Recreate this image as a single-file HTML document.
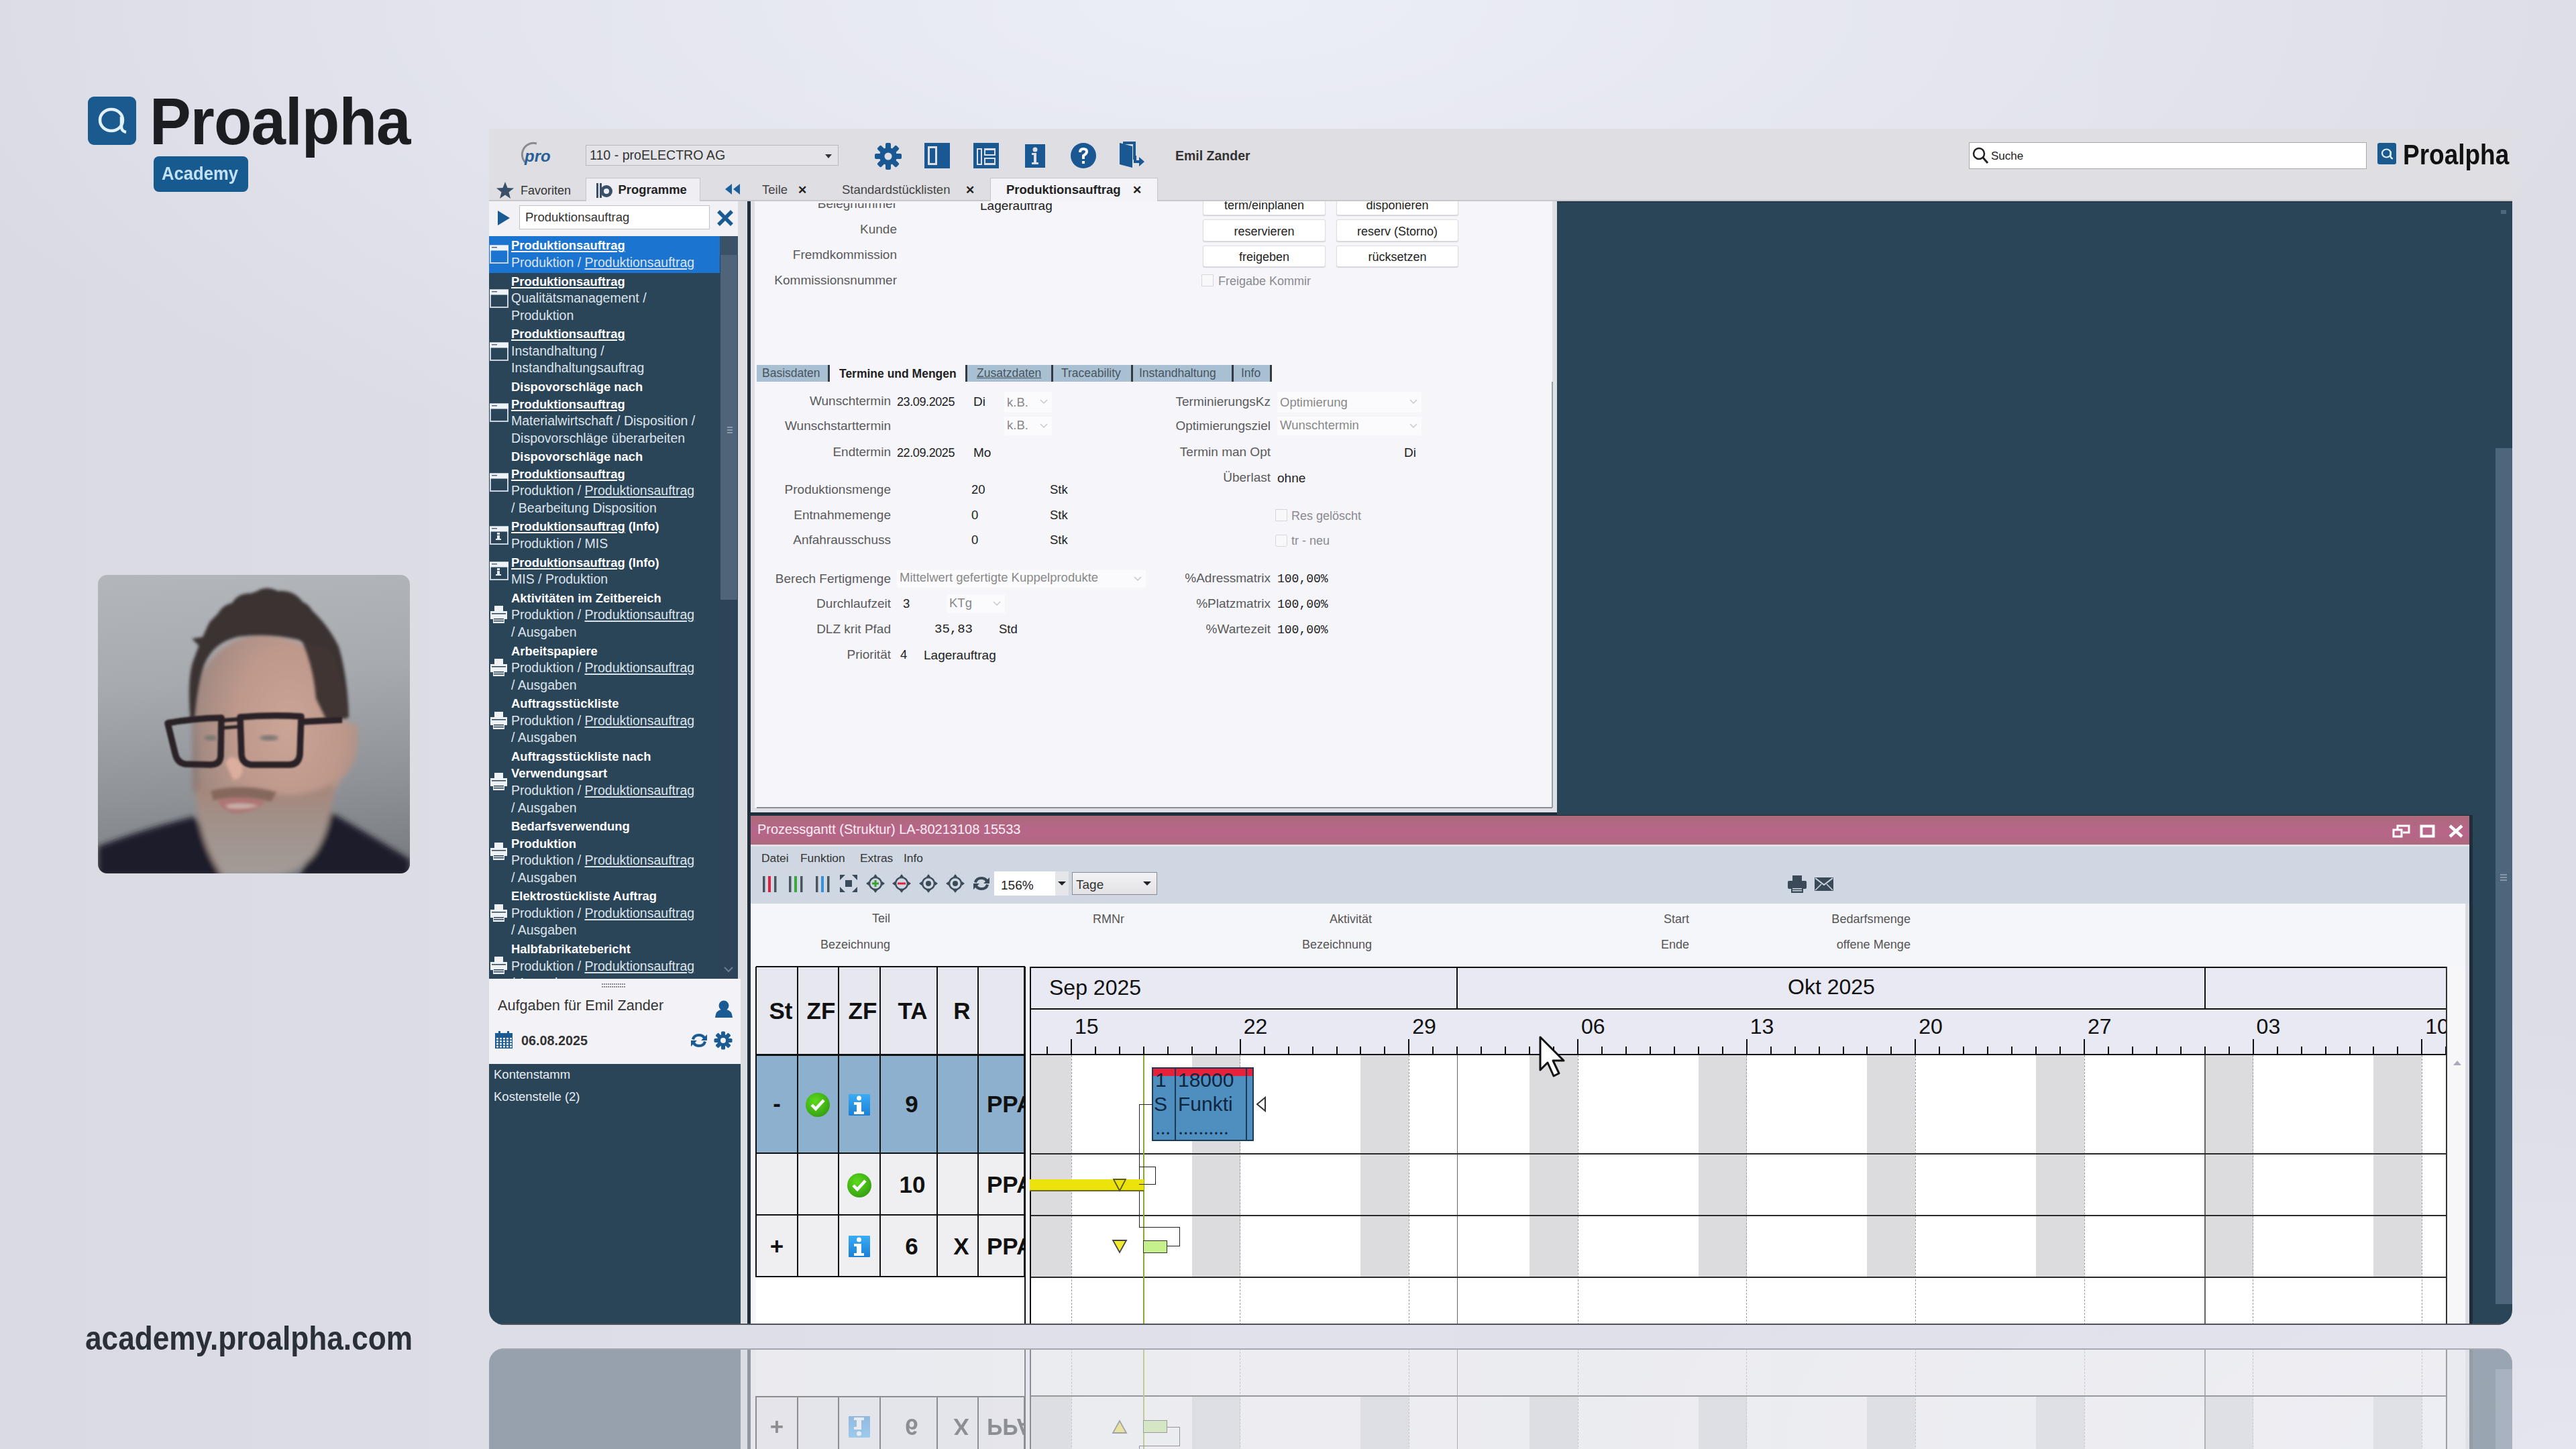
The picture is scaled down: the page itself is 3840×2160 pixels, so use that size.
<!DOCTYPE html><html><head><meta charset="utf-8"><style>
html,body{margin:0;padding:0;width:3840px;height:2160px;overflow:hidden;}
body{background:radial-gradient(ellipse 55% 35% at 48% 0%,rgba(236,238,248,0.95),rgba(236,238,248,0) 100%),radial-gradient(ellipse 40% 30% at 100% 100%,rgba(230,231,240,0.8),rgba(230,231,240,0) 100%),linear-gradient(90deg,#d9dae2 0%,#dcdde5 20%,#e0e1e9 50%,#dcdde5 100%);position:relative;font-family:'Liberation Sans',sans-serif;}
.t{position:absolute;white-space:nowrap;line-height:1;}
.r{position:absolute;}
.u{text-decoration:underline;text-underline-offset:2px;text-decoration-thickness:1.5px;}
</style></head><body>
<div class="r" style="left:131.0px;top:144.0px;width:72.0px;height:72.0px;background:#1b5a8f;border-radius:9px;"></div>
<svg class="r" style="left:131px;top:144px;" width="72" height="72" viewBox="0 0 72 72"><ellipse cx="35" cy="35" rx="17" ry="16" fill="none" stroke="#e3f1fd" stroke-width="4.5"/><path d="M50 30 L50 46 Q51 52 57 53" fill="none" stroke="#e3f1fd" stroke-width="4.5"/></svg>
<div class="t" style="left:223.0px;top:131.2px;font-size:99px;color:#1b1d21;font-weight:700;font-family:'Liberation Sans',sans-serif;transform-origin:0 0;transform:scaleX(0.935);letter-spacing:-1px;">Proalpha</div>
<div class="r" style="left:229.0px;top:233.0px;width:141.0px;height:53.0px;background:#175a8f;border-radius:8px;"></div>
<div class="t" style="left:241.0px;top:245.3px;font-size:28px;color:#c4e2f7;font-weight:700;font-family:'Liberation Sans',sans-serif;transform-origin:0 0;transform:scaleX(0.915);">Academy</div>
<div class="t" style="left:127.0px;top:1969.7px;font-size:50px;color:#2b2f37;font-weight:700;font-family:'Liberation Sans',sans-serif;transform-origin:0 0;transform:scaleX(0.884);">academy.proalpha.com</div>
<div class="r" style="left:146px;top:857px;width:465px;height:445px;border-radius:14px;overflow:hidden;background:linear-gradient(175deg,#b3b7bc 0%,#a7abb0 35%,#8f9297 70%,#76797e 100%);">
<svg width="465" height="445" viewBox="0 0 465 445" style="position:absolute;left:0;top:0">
<defs>
<filter id="bl" x="-20%" y="-20%" width="140%" height="140%"><feGaussianBlur stdDeviation="4"/></filter>
<filter id="bl2" x="-20%" y="-20%" width="140%" height="140%"><feGaussianBlur stdDeviation="2"/></filter>
<filter id="bl3" x="-20%" y="-20%" width="140%" height="140%"><feGaussianBlur stdDeviation="1"/></filter>
<radialGradient id="skin" cx="58%" cy="38%" r="60%"><stop offset="0" stop-color="#cba596"/><stop offset="0.55" stop-color="#bd988b"/><stop offset="1" stop-color="#9c8780"/></radialGradient>
<linearGradient id="brd" x1="0" y1="0" x2="0" y2="1"><stop offset="0" stop-color="#a88375"/><stop offset="0.45" stop-color="#a1918a"/><stop offset="1" stop-color="#a29c98"/></linearGradient>
</defs>
<g filter="url(#bl)">
<path d="M0 405 Q60 381 144 360 L200 450 L0 450 Z" fill="#1b1c29"/>
<path d="M465 424 Q400 384 347 354 L300 450 L465 450 Z" fill="#1b1c29"/>
<path d="M141 172 Q170 95 240 88 Q300 90 330 120 Q356 160 360 215 L387 225 Q392 280 362 305 L353 322 Q345 372 320 410 Q290 450 250 450 L185 450 Q150 400 146 330 Q141 250 141 172 Z" fill="url(#skin)"/>
<path d="M145 300 Q165 330 175 325 Q220 312 262 325 Q300 335 352 310 Q350 380 320 420 Q290 450 250 450 L190 450 Q155 400 148 340 Z" fill="url(#brd)"/>
<path d="M141 172 Q150 260 150 320 Q145 330 141 320 Z" fill="#8f7a74"/>
</g>
<g filter="url(#bl2)">
<path d="M138 215 Q132 150 144 123 Q152 100 166 71 Q195 38 235 25 Q275 22 307 43 Q340 68 359 107 Q372 150 374 212 L356 214 Q345 170 330 135 Q318 108 300 97 Q255 86 210 92 Q172 100 158 135 Q148 165 144 215 Z" fill="#3b3330"/>
<path d="M325 184 Q322 140 305 100 L345 110 Q368 150 372 214 L340 215 Z" fill="#3f3632"/>
<path d="M172 75 Q180 45 200 42 Q210 25 232 28 Q248 14 268 24 Q292 22 305 40 Q322 48 322 66 Z" fill="#3b3330"/>
<path d="M155 110 L140 95 L160 92 Z" fill="#3b3330"/>
<path d="M178 336 Q215 326 250 338 Q232 356 200 355 Q185 350 178 336 Z" fill="#ad7674"/>
<path d="M190 280 Q200 262 214 282 Q220 302 202 306 Z" fill="#dcae9f"/>
<path d="M168 322 Q215 310 266 324 L258 338 Q215 326 172 336 Z" fill="#85685c"/><path d="M190 343 Q215 338 240 344 Q220 350 195 348 Z" fill="#c9aea8"/>
</g>
<g filter="url(#bl3)" fill="none" stroke="#2a2028" stroke-width="9.5" stroke-linejoin="round">
<path d="M104 221 Q140 214 184 213 L183 270 Q182 283 168 283 L130 282 Q118 280 115 266 Z"/>
<path d="M212 212 Q260 208 303 211 L301 268 Q299 283 285 283 L228 283 Q215 281 214 268 Z"/>
<path d="M184 217 L212 215" stroke-width="6"/><path d="M187 228 L213 226" stroke-width="5"/><path d="M303 219 L364 216"/>
</g>
<g filter="url(#bl2)"><ellipse cx="168" cy="243" rx="10" ry="4" fill="#7d7874"/><ellipse cx="255" cy="243" rx="14" ry="4" fill="#7d7874"/></g>
</svg></div>
<div id="app" class="r" style="left:729px;top:192px;width:3016px;height:1783px;border-radius:0 0 22px 22px;overflow:hidden;background:#e0e0e4;">
<div class="r" style="left:0.0px;top:0.0px;width:3016.0px;height:108.0px;background:#dfdfe3;"></div>
<svg class="r" style="left:41px;top:16px;" width="60" height="42" viewBox="0 0 60 42"><path d="M14 35 A17 17 0 0 1 30 6" fill="none" stroke="#8a8a90" stroke-width="3"/></svg>
<div class="t" style="left:53.0px;top:28.7px;font-size:24px;color:#2a5f95;font-weight:700;font-family:'Liberation Sans',sans-serif;font-style:italic;">pro</div>
<div class="r" style="left:144.0px;top:24.0px;width:377.0px;height:31.0px;background:#e4e4e8;border:1.5px solid #b9b9be;box-sizing:border-box;"></div>
<div class="t" style="left:150.0px;top:30.4px;font-size:19.6px;color:#333;font-weight:400;font-family:'Liberation Sans',sans-serif;">110 - proELECTRO AG</div>
<svg class="r" style="left:499px;top:36px;" width="14" height="10" viewBox="0 0 14 10"><path d="M2 2 L12 2 L7 8 Z" fill="#333"/></svg>
<svg class="r" style="left:574px;top:20px;" width="42" height="42" viewBox="0 0 42 42"><g transform="translate(21,21)" fill="#1a5893"><circle r="13"/><rect x="-4" y="-20" width="8" height="11" rx="2" transform="rotate(0)"/><rect x="-4" y="-20" width="8" height="11" rx="2" transform="rotate(45)"/><rect x="-4" y="-20" width="8" height="11" rx="2" transform="rotate(90)"/><rect x="-4" y="-20" width="8" height="11" rx="2" transform="rotate(135)"/><rect x="-4" y="-20" width="8" height="11" rx="2" transform="rotate(180)"/><rect x="-4" y="-20" width="8" height="11" rx="2" transform="rotate(225)"/><rect x="-4" y="-20" width="8" height="11" rx="2" transform="rotate(270)"/><rect x="-4" y="-20" width="8" height="11" rx="2" transform="rotate(315)"/></g><circle cx="21" cy="21" r="5.5" fill="#dfdfe3"/></svg>
<svg class="r" style="left:648px;top:20px;" width="40" height="40" viewBox="0 0 40 40"><rect x="1" y="1" width="38" height="38" fill="#1a5893"/><rect x="6" y="6" width="14" height="28" fill="#dfdfe3"/><rect x="9" y="9" width="8" height="22" fill="#1a5893"/></svg>
<svg class="r" style="left:721px;top:20px;" width="40" height="40" viewBox="0 0 40 40"><rect x="1" y="1" width="38" height="38" fill="#1a5893"/><rect x="6" y="9" width="8" height="25" fill="#dfdfe3"/><rect x="17" y="9" width="17" height="11" fill="#dfdfe3"/><rect x="17" y="23" width="17" height="11" fill="#dfdfe3"/><rect x="8" y="11" width="4" height="21" fill="#1a5893"/><rect x="19" y="12" width="13" height="6" fill="#1a5893"/><rect x="19" y="25" width="13" height="6" fill="#1a5893"/></svg>
<svg class="r" style="left:796px;top:20px;" width="36" height="40" viewBox="0 0 36 40"><rect x="3" y="3" width="30" height="35" fill="#1a5893"/><circle cx="18" cy="11" r="3.5" fill="#dfdfe3"/><path d="M13 16 L20 16 L20 30 L23 30 L23 33 L13 33 L13 30 L16 30 L16 19 L13 19 Z" fill="#dfdfe3"/></svg>
<svg class="r" style="left:866px;top:20px;" width="40" height="40" viewBox="0 0 40 40"><circle cx="20" cy="20" r="19" fill="#1a5893"/><path d="M13 15 Q13 8 20 8 Q27 8 27 14 Q27 18 22 21 L22 25 L18 25 L18 19 Q23 16 23 14 Q23 12 20 12 Q17 12 17 15 Z" fill="#fff"/><rect x="18" y="28" width="4" height="4" fill="#fff"/></svg>
<svg class="r" style="left:937px;top:18px;" width="42" height="44" viewBox="0 0 42 44"><path d="M3 3 L22 8 L22 40 L3 35 Z" fill="#1a5893"/><path d="M8 3 L25 3 L25 28" fill="none" stroke="#1a5893" stroke-width="4"/><path d="M24 22 L24 33 L32 33 L32 38 L40 31 L32 24 L32 29 L28 29 L28 22 Z" fill="#1a5893"/></svg>
<div class="t" style="left:1023.0px;top:30.5px;font-size:19.5px;color:#333;font-weight:700;font-family:'Liberation Sans',sans-serif;">Emil Zander</div>
<div class="r" style="left:2206.0px;top:20.0px;width:593.0px;height:40.0px;background:#ffffff;border:1.5px solid #a8a8ad;box-sizing:border-box;"></div>
<svg class="r" style="left:2210px;top:26px;" width="28" height="30" viewBox="0 0 28 30"><circle cx="11" cy="11" r="8" fill="none" stroke="#222" stroke-width="2.5"/><path d="M17 17 L24 25" stroke="#222" stroke-width="3"/></svg>
<div class="t" style="left:2239.0px;top:31.6px;font-size:17px;color:#222;font-weight:400;font-family:'Liberation Sans',sans-serif;">Suche</div>
<div class="r" style="left:2815.0px;top:21.0px;width:28.0px;height:32.0px;background:#1b5a8f;border-radius:3px;"></div>
<svg class="r" style="left:2815px;top:21px;" width="28" height="32" viewBox="0 0 28 32"><ellipse cx="13.5" cy="15.5" rx="6.5" ry="6" fill="none" stroke="#e3f1fd" stroke-width="2.2"/><path d="M19.5 13 L19.5 20 Q20 23 23 23.5" fill="none" stroke="#e3f1fd" stroke-width="2.2"/></svg>
<div class="t" style="left:2853.0px;top:16.6px;font-size:43px;color:#111;font-weight:700;font-family:'Liberation Sans',sans-serif;transform-origin:0 0;transform:scaleX(0.86);">Proalpha</div>
<div class="r" style="left:0.0px;top:106.0px;width:3016.0px;height:2.0px;background:#c8c8cc;"></div>
<svg class="r" style="left:10px;top:78px;" width="28" height="28" viewBox="0 0 28 28"><path d="M14 1 L17.5 10 L27 10.5 L19.5 16.5 L22 26 L14 20.5 L6 26 L8.5 16.5 L1 10.5 L10.5 10 Z" fill="#3a5068"/></svg>
<div class="t" style="left:47.0px;top:82.8px;font-size:18px;color:#333;font-weight:400;font-family:'Liberation Sans',sans-serif;">Favoriten</div>
<div class="r" style="left:144.0px;top:73.0px;width:171.0px;height:35.0px;background:#eeeef3;border:1.5px solid #c6c6cb;border-bottom:none;box-sizing:border-box;"></div>
<svg class="r" style="left:158px;top:78px;" width="28" height="28" viewBox="0 0 28 28"><rect x="2" y="3" width="3" height="22" fill="#3a5068"/><rect x="7" y="3" width="3" height="22" fill="#3a5068"/><circle cx="17" cy="15" r="9" fill="#3a5068"/><circle cx="17" cy="15" r="4" fill="#eeeef3"/></svg>
<div class="t" style="left:192.5px;top:82.4px;font-size:18.4px;color:#222;font-weight:700;font-family:'Liberation Sans',sans-serif;">Programme</div>
<svg class="r" style="left:350px;top:80px;" width="26" height="20" viewBox="0 0 26 20"><path d="M12 2 L12 18 L2 10 Z M24 2 L24 18 L14 10 Z" fill="#1a5f9e"/></svg>
<div class="t" style="left:407.0px;top:82.3px;font-size:18.5px;color:#444;font-weight:400;font-family:'Liberation Sans',sans-serif;">Teile</div>
<div class="t" style="left:460.0px;top:82.6px;font-size:17px;color:#222;font-weight:700;font-family:'Liberation Sans',sans-serif;">✕</div>
<div class="t" style="left:526.0px;top:82.3px;font-size:18.5px;color:#444;font-weight:400;font-family:'Liberation Sans',sans-serif;">Standardstücklisten</div>
<div class="t" style="left:710.0px;top:82.6px;font-size:17px;color:#222;font-weight:700;font-family:'Liberation Sans',sans-serif;">✕</div>
<div class="r" style="left:747.0px;top:73.0px;width:250.0px;height:35.0px;background:#f3f3f8;border:1.5px solid #c6c6cb;border-bottom:none;box-sizing:border-box;"></div>
<div class="t" style="left:771.0px;top:82.3px;font-size:18.5px;color:#222;font-weight:700;font-family:'Liberation Sans',sans-serif;">Produktionsauftrag</div>
<div class="t" style="left:959.0px;top:82.6px;font-size:17px;color:#222;font-weight:700;font-family:'Liberation Sans',sans-serif;">✕</div>
<div class="r" style="left:0.0px;top:108.0px;width:375.0px;height:52.0px;background:#f2f2f6;"></div>
<svg class="r" style="left:11px;top:121px;" width="22" height="24" viewBox="0 0 22 24"><path d="M2 1 L20 12 L2 23 Z" fill="#1a5b93"/></svg>
<div class="r" style="left:45.0px;top:114.0px;width:284.0px;height:36.0px;background:#ffffff;border:1.5px solid #c4c4c8;box-sizing:border-box;"></div>
<div class="t" style="left:54.0px;top:123.3px;font-size:18.5px;color:#333;font-weight:400;font-family:'Liberation Sans',sans-serif;">Produktionsauftrag</div>
<svg class="r" style="left:339px;top:120px;" width="26" height="26" viewBox="0 0 26 26"><path d="M3 3 L23 23 M23 3 L3 23" stroke="#1a5b93" stroke-width="5.5"/></svg>
<div class="r" style="left:0.0px;top:160.0px;width:375.0px;height:1107.0px;background:#2a4458;"></div>
<div class="r" style="left:0.0px;top:160.0px;width:344.0px;height:55.0px;background:#1b74d0;"></div>
<div class="r" style="left:344.0px;top:160.0px;width:27.0px;height:1107.0px;background:#2d4358;"></div>
<div class="r" style="left:344.0px;top:160.0px;width:27.0px;height:28.0px;background:#3b5165;"></div>
<div class="r" style="left:345.0px;top:188.0px;width:25.0px;height:514.0px;background:#4f6478;"></div>
<div class="r" style="left:355.0px;top:444.0px;width:8.0px;height:2.0px;background:#8a9aa9;"></div>
<div class="r" style="left:355.0px;top:448.0px;width:8.0px;height:2.0px;background:#8a9aa9;"></div>
<div class="r" style="left:355.0px;top:452.0px;width:8.0px;height:2.0px;background:#8a9aa9;"></div>
<div class="r" style="left:371.0px;top:108.0px;width:13.0px;height:1675.0px;background:#dcdde3;"></div>
<div class="r" style="left:385.0px;top:108.0px;width:5.0px;height:1675.0px;background:#1f2e3b;"></div>
<div class="r" style="left:0px;top:160px;width:344px;height:1107px;overflow:hidden;">
<svg class="r" style="left:1px;top:13px;" width="28" height="28" viewBox="0 0 28 28"><rect x="1" y="1.5" width="26" height="25.5" fill="none" stroke="#c9d3dd" stroke-width="2"/><rect x="0" y="0.5" width="28" height="8" fill="#eef3f8"/><rect x="3" y="3" width="8" height="1.5" fill="#556677"/></svg>
<div class="t" style="left:33.0px;top:5.4px;font-size:18.4px;color:#ffffff;font-weight:700;font-family:'Liberation Sans',sans-serif;"><span class="u">Produktionsauftrag</span></div>
<div class="t" style="left:33.0px;top:30.0px;font-size:19.5px;color:#dce3ea;font-weight:400;font-family:'Liberation Sans',sans-serif;">Produktion / <span class="u">Produktionsauftrag</span></div>
<svg class="r" style="left:1px;top:79px;" width="28" height="28" viewBox="0 0 28 28"><rect x="1" y="1.5" width="26" height="25.5" fill="none" stroke="#c9d3dd" stroke-width="2"/><rect x="0" y="0.5" width="28" height="8" fill="#eef3f8"/><rect x="3" y="3" width="8" height="1.5" fill="#556677"/></svg>
<div class="t" style="left:33.0px;top:58.6px;font-size:18.4px;color:#ffffff;font-weight:700;font-family:'Liberation Sans',sans-serif;"><span class="u">Produktionsauftrag</span></div>
<div class="t" style="left:33.0px;top:83.2px;font-size:19.5px;color:#dce3ea;font-weight:400;font-family:'Liberation Sans',sans-serif;">Qualitätsmanagement /</div>
<div class="t" style="left:33.0px;top:108.7px;font-size:19.5px;color:#dce3ea;font-weight:400;font-family:'Liberation Sans',sans-serif;">Produktion</div>
<svg class="r" style="left:1px;top:158px;" width="28" height="28" viewBox="0 0 28 28"><rect x="1" y="1.5" width="26" height="25.5" fill="none" stroke="#c9d3dd" stroke-width="2"/><rect x="0" y="0.5" width="28" height="8" fill="#eef3f8"/><rect x="3" y="3" width="8" height="1.5" fill="#556677"/></svg>
<div class="t" style="left:33.0px;top:137.3px;font-size:18.4px;color:#ffffff;font-weight:700;font-family:'Liberation Sans',sans-serif;"><span class="u">Produktionsauftrag</span></div>
<div class="t" style="left:33.0px;top:161.9px;font-size:19.5px;color:#dce3ea;font-weight:400;font-family:'Liberation Sans',sans-serif;">Instandhaltung /</div>
<div class="t" style="left:33.0px;top:187.4px;font-size:19.5px;color:#dce3ea;font-weight:400;font-family:'Liberation Sans',sans-serif;">Instandhaltungsauftrag</div>
<svg class="r" style="left:1px;top:249px;" width="28" height="28" viewBox="0 0 28 28"><rect x="1" y="1.5" width="26" height="25.5" fill="none" stroke="#c9d3dd" stroke-width="2"/><rect x="0" y="0.5" width="28" height="8" fill="#eef3f8"/><rect x="3" y="3" width="8" height="1.5" fill="#556677"/></svg>
<div class="t" style="left:33.0px;top:216.0px;font-size:18.4px;color:#ffffff;font-weight:700;font-family:'Liberation Sans',sans-serif;">Dispovorschläge nach</div>
<div class="t" style="left:33.0px;top:241.5px;font-size:18.4px;color:#ffffff;font-weight:700;font-family:'Liberation Sans',sans-serif;"><span class="u">Produktionsauftrag</span></div>
<div class="t" style="left:33.0px;top:266.1px;font-size:19.5px;color:#dce3ea;font-weight:400;font-family:'Liberation Sans',sans-serif;">Materialwirtschaft / Disposition /</div>
<div class="t" style="left:33.0px;top:291.6px;font-size:19.5px;color:#dce3ea;font-weight:400;font-family:'Liberation Sans',sans-serif;">Dispovorschläge überarbeiten</div>
<svg class="r" style="left:1px;top:353px;" width="28" height="28" viewBox="0 0 28 28"><rect x="1" y="1.5" width="26" height="25.5" fill="none" stroke="#c9d3dd" stroke-width="2"/><rect x="0" y="0.5" width="28" height="8" fill="#eef3f8"/><rect x="3" y="3" width="8" height="1.5" fill="#556677"/></svg>
<div class="t" style="left:33.0px;top:320.2px;font-size:18.4px;color:#ffffff;font-weight:700;font-family:'Liberation Sans',sans-serif;">Dispovorschläge nach</div>
<div class="t" style="left:33.0px;top:345.7px;font-size:18.4px;color:#ffffff;font-weight:700;font-family:'Liberation Sans',sans-serif;"><span class="u">Produktionsauftrag</span></div>
<div class="t" style="left:33.0px;top:370.3px;font-size:19.5px;color:#dce3ea;font-weight:400;font-family:'Liberation Sans',sans-serif;">Produktion / <span class="u">Produktionsauftrag</span></div>
<div class="t" style="left:33.0px;top:395.8px;font-size:19.5px;color:#dce3ea;font-weight:400;font-family:'Liberation Sans',sans-serif;">/ Bearbeitung Disposition</div>
<svg class="r" style="left:1px;top:432px;" width="28" height="28" viewBox="0 0 28 28"><rect x="1" y="1.5" width="26" height="25.5" fill="none" stroke="#c9d3dd" stroke-width="2"/><rect x="0" y="0.5" width="28" height="8" fill="#eef3f8"/><rect x="3" y="3" width="8" height="1.5" fill="#556677"/><rect x="11" y="10" width="4" height="3" fill="#e6ecf1"/><rect x="11" y="14" width="4" height="7" fill="#e6ecf1"/><rect x="9" y="19" width="8" height="2" fill="#e6ecf1"/></svg>
<div class="t" style="left:33.0px;top:424.4px;font-size:18.4px;color:#ffffff;font-weight:700;font-family:'Liberation Sans',sans-serif;"><span class="u">Produktionsauftrag</span> (Info)</div>
<div class="t" style="left:33.0px;top:449.0px;font-size:19.5px;color:#dce3ea;font-weight:400;font-family:'Liberation Sans',sans-serif;">Produktion / MIS</div>
<svg class="r" style="left:1px;top:485px;" width="28" height="28" viewBox="0 0 28 28"><rect x="1" y="1.5" width="26" height="25.5" fill="none" stroke="#c9d3dd" stroke-width="2"/><rect x="0" y="0.5" width="28" height="8" fill="#eef3f8"/><rect x="3" y="3" width="8" height="1.5" fill="#556677"/><rect x="11" y="10" width="4" height="3" fill="#e6ecf1"/><rect x="11" y="14" width="4" height="7" fill="#e6ecf1"/><rect x="9" y="19" width="8" height="2" fill="#e6ecf1"/></svg>
<div class="t" style="left:33.0px;top:477.6px;font-size:18.4px;color:#ffffff;font-weight:700;font-family:'Liberation Sans',sans-serif;"><span class="u">Produktionsauftrag</span> (Info)</div>
<div class="t" style="left:33.0px;top:502.2px;font-size:19.5px;color:#dce3ea;font-weight:400;font-family:'Liberation Sans',sans-serif;">MIS / Produktion</div>
<svg class="r" style="left:1px;top:551px;" width="28" height="28" viewBox="0 0 28 28"><rect x="7" y="0" width="13" height="9" fill="#eef2f5"/><rect x="1" y="8" width="25" height="12" fill="#eef2f5"/><rect x="5" y="16" width="17" height="10" fill="#eef2f5"/><rect x="6" y="19" width="15" height="1.5" fill="#2a4257"/><rect x="6" y="22" width="15" height="1.5" fill="#2a4257"/><rect x="3" y="11" width="21" height="1.5" fill="#2a4257"/></svg>
<div class="t" style="left:33.0px;top:530.8px;font-size:18.4px;color:#ffffff;font-weight:700;font-family:'Liberation Sans',sans-serif;">Aktivitäten im Zeitbereich</div>
<div class="t" style="left:33.0px;top:555.4px;font-size:19.5px;color:#dce3ea;font-weight:400;font-family:'Liberation Sans',sans-serif;">Produktion / <span class="u">Produktionsauftrag</span></div>
<div class="t" style="left:33.0px;top:580.9px;font-size:19.5px;color:#dce3ea;font-weight:400;font-family:'Liberation Sans',sans-serif;">/ Ausgaben</div>
<svg class="r" style="left:1px;top:630px;" width="28" height="28" viewBox="0 0 28 28"><rect x="7" y="0" width="13" height="9" fill="#eef2f5"/><rect x="1" y="8" width="25" height="12" fill="#eef2f5"/><rect x="5" y="16" width="17" height="10" fill="#eef2f5"/><rect x="6" y="19" width="15" height="1.5" fill="#2a4257"/><rect x="6" y="22" width="15" height="1.5" fill="#2a4257"/><rect x="3" y="11" width="21" height="1.5" fill="#2a4257"/></svg>
<div class="t" style="left:33.0px;top:609.5px;font-size:18.4px;color:#ffffff;font-weight:700;font-family:'Liberation Sans',sans-serif;">Arbeitspapiere</div>
<div class="t" style="left:33.0px;top:634.1px;font-size:19.5px;color:#dce3ea;font-weight:400;font-family:'Liberation Sans',sans-serif;">Produktion / <span class="u">Produktionsauftrag</span></div>
<div class="t" style="left:33.0px;top:659.6px;font-size:19.5px;color:#dce3ea;font-weight:400;font-family:'Liberation Sans',sans-serif;">/ Ausgaben</div>
<svg class="r" style="left:1px;top:709px;" width="28" height="28" viewBox="0 0 28 28"><rect x="7" y="0" width="13" height="9" fill="#eef2f5"/><rect x="1" y="8" width="25" height="12" fill="#eef2f5"/><rect x="5" y="16" width="17" height="10" fill="#eef2f5"/><rect x="6" y="19" width="15" height="1.5" fill="#2a4257"/><rect x="6" y="22" width="15" height="1.5" fill="#2a4257"/><rect x="3" y="11" width="21" height="1.5" fill="#2a4257"/></svg>
<div class="t" style="left:33.0px;top:688.2px;font-size:18.4px;color:#ffffff;font-weight:700;font-family:'Liberation Sans',sans-serif;">Auftragsstückliste</div>
<div class="t" style="left:33.0px;top:712.8px;font-size:19.5px;color:#dce3ea;font-weight:400;font-family:'Liberation Sans',sans-serif;">Produktion / <span class="u">Produktionsauftrag</span></div>
<div class="t" style="left:33.0px;top:738.3px;font-size:19.5px;color:#dce3ea;font-weight:400;font-family:'Liberation Sans',sans-serif;">/ Ausgaben</div>
<svg class="r" style="left:1px;top:800px;" width="28" height="28" viewBox="0 0 28 28"><rect x="7" y="0" width="13" height="9" fill="#eef2f5"/><rect x="1" y="8" width="25" height="12" fill="#eef2f5"/><rect x="5" y="16" width="17" height="10" fill="#eef2f5"/><rect x="6" y="19" width="15" height="1.5" fill="#2a4257"/><rect x="6" y="22" width="15" height="1.5" fill="#2a4257"/><rect x="3" y="11" width="21" height="1.5" fill="#2a4257"/></svg>
<div class="t" style="left:33.0px;top:766.9px;font-size:18.4px;color:#ffffff;font-weight:700;font-family:'Liberation Sans',sans-serif;">Auftragsstückliste nach</div>
<div class="t" style="left:33.0px;top:792.4px;font-size:18.4px;color:#ffffff;font-weight:700;font-family:'Liberation Sans',sans-serif;">Verwendungsart</div>
<div class="t" style="left:33.0px;top:817.0px;font-size:19.5px;color:#dce3ea;font-weight:400;font-family:'Liberation Sans',sans-serif;">Produktion / <span class="u">Produktionsauftrag</span></div>
<div class="t" style="left:33.0px;top:842.5px;font-size:19.5px;color:#dce3ea;font-weight:400;font-family:'Liberation Sans',sans-serif;">/ Ausgaben</div>
<svg class="r" style="left:1px;top:904px;" width="28" height="28" viewBox="0 0 28 28"><rect x="7" y="0" width="13" height="9" fill="#eef2f5"/><rect x="1" y="8" width="25" height="12" fill="#eef2f5"/><rect x="5" y="16" width="17" height="10" fill="#eef2f5"/><rect x="6" y="19" width="15" height="1.5" fill="#2a4257"/><rect x="6" y="22" width="15" height="1.5" fill="#2a4257"/><rect x="3" y="11" width="21" height="1.5" fill="#2a4257"/></svg>
<div class="t" style="left:33.0px;top:871.1px;font-size:18.4px;color:#ffffff;font-weight:700;font-family:'Liberation Sans',sans-serif;">Bedarfsverwendung</div>
<div class="t" style="left:33.0px;top:896.6px;font-size:18.4px;color:#ffffff;font-weight:700;font-family:'Liberation Sans',sans-serif;">Produktion</div>
<div class="t" style="left:33.0px;top:921.2px;font-size:19.5px;color:#dce3ea;font-weight:400;font-family:'Liberation Sans',sans-serif;">Produktion / <span class="u">Produktionsauftrag</span></div>
<div class="t" style="left:33.0px;top:946.7px;font-size:19.5px;color:#dce3ea;font-weight:400;font-family:'Liberation Sans',sans-serif;">/ Ausgaben</div>
<svg class="r" style="left:1px;top:996px;" width="28" height="28" viewBox="0 0 28 28"><rect x="7" y="0" width="13" height="9" fill="#eef2f5"/><rect x="1" y="8" width="25" height="12" fill="#eef2f5"/><rect x="5" y="16" width="17" height="10" fill="#eef2f5"/><rect x="6" y="19" width="15" height="1.5" fill="#2a4257"/><rect x="6" y="22" width="15" height="1.5" fill="#2a4257"/><rect x="3" y="11" width="21" height="1.5" fill="#2a4257"/></svg>
<div class="t" style="left:33.0px;top:975.3px;font-size:18.4px;color:#ffffff;font-weight:700;font-family:'Liberation Sans',sans-serif;">Elektrostückliste Auftrag</div>
<div class="t" style="left:33.0px;top:999.9px;font-size:19.5px;color:#dce3ea;font-weight:400;font-family:'Liberation Sans',sans-serif;">Produktion / <span class="u">Produktionsauftrag</span></div>
<div class="t" style="left:33.0px;top:1025.4px;font-size:19.5px;color:#dce3ea;font-weight:400;font-family:'Liberation Sans',sans-serif;">/ Ausgaben</div>
<svg class="r" style="left:1px;top:1074px;" width="28" height="28" viewBox="0 0 28 28"><rect x="7" y="0" width="13" height="9" fill="#eef2f5"/><rect x="1" y="8" width="25" height="12" fill="#eef2f5"/><rect x="5" y="16" width="17" height="10" fill="#eef2f5"/><rect x="6" y="19" width="15" height="1.5" fill="#2a4257"/><rect x="6" y="22" width="15" height="1.5" fill="#2a4257"/><rect x="3" y="11" width="21" height="1.5" fill="#2a4257"/></svg>
<div class="t" style="left:33.0px;top:1054.0px;font-size:18.4px;color:#ffffff;font-weight:700;font-family:'Liberation Sans',sans-serif;">Halbfabrikatebericht</div>
<div class="t" style="left:33.0px;top:1078.6px;font-size:19.5px;color:#dce3ea;font-weight:400;font-family:'Liberation Sans',sans-serif;">Produktion / <span class="u">Produktionsauftrag</span></div>
<div class="t" style="left:33.0px;top:1104.1px;font-size:19.5px;color:#dce3ea;font-weight:400;font-family:'Liberation Sans',sans-serif;">/ Ausgaben</div>
</div>
<svg class="r" style="left:349px;top:1248px;" width="16" height="10" viewBox="0 0 16 10"><path d="M2 2 L8 8 L14 2" fill="none" stroke="#6b7f92" stroke-width="2"/></svg>
<div class="r" style="left:0.0px;top:1267.0px;width:375.0px;height:127.0px;background:#f3f3f7;"></div>
<div class="r" style="left:168.0px;top:1274.0px;width:1.5px;height:1.5px;background:#8a8a90;"></div>
<div class="r" style="left:168.0px;top:1278.0px;width:1.5px;height:1.5px;background:#8a8a90;"></div>
<div class="r" style="left:171.0px;top:1274.0px;width:1.5px;height:1.5px;background:#8a8a90;"></div>
<div class="r" style="left:171.0px;top:1278.0px;width:1.5px;height:1.5px;background:#8a8a90;"></div>
<div class="r" style="left:174.0px;top:1274.0px;width:1.5px;height:1.5px;background:#8a8a90;"></div>
<div class="r" style="left:174.0px;top:1278.0px;width:1.5px;height:1.5px;background:#8a8a90;"></div>
<div class="r" style="left:177.0px;top:1274.0px;width:1.5px;height:1.5px;background:#8a8a90;"></div>
<div class="r" style="left:177.0px;top:1278.0px;width:1.5px;height:1.5px;background:#8a8a90;"></div>
<div class="r" style="left:180.0px;top:1274.0px;width:1.5px;height:1.5px;background:#8a8a90;"></div>
<div class="r" style="left:180.0px;top:1278.0px;width:1.5px;height:1.5px;background:#8a8a90;"></div>
<div class="r" style="left:183.0px;top:1274.0px;width:1.5px;height:1.5px;background:#8a8a90;"></div>
<div class="r" style="left:183.0px;top:1278.0px;width:1.5px;height:1.5px;background:#8a8a90;"></div>
<div class="r" style="left:186.0px;top:1274.0px;width:1.5px;height:1.5px;background:#8a8a90;"></div>
<div class="r" style="left:186.0px;top:1278.0px;width:1.5px;height:1.5px;background:#8a8a90;"></div>
<div class="r" style="left:189.0px;top:1274.0px;width:1.5px;height:1.5px;background:#8a8a90;"></div>
<div class="r" style="left:189.0px;top:1278.0px;width:1.5px;height:1.5px;background:#8a8a90;"></div>
<div class="r" style="left:192.0px;top:1274.0px;width:1.5px;height:1.5px;background:#8a8a90;"></div>
<div class="r" style="left:192.0px;top:1278.0px;width:1.5px;height:1.5px;background:#8a8a90;"></div>
<div class="r" style="left:195.0px;top:1274.0px;width:1.5px;height:1.5px;background:#8a8a90;"></div>
<div class="r" style="left:195.0px;top:1278.0px;width:1.5px;height:1.5px;background:#8a8a90;"></div>
<div class="r" style="left:198.0px;top:1274.0px;width:1.5px;height:1.5px;background:#8a8a90;"></div>
<div class="r" style="left:198.0px;top:1278.0px;width:1.5px;height:1.5px;background:#8a8a90;"></div>
<div class="r" style="left:201.0px;top:1274.0px;width:1.5px;height:1.5px;background:#8a8a90;"></div>
<div class="r" style="left:201.0px;top:1278.0px;width:1.5px;height:1.5px;background:#8a8a90;"></div>
<div class="t" style="left:13.0px;top:1295.6px;font-size:21.7px;color:#333;font-weight:400;font-family:'Liberation Sans',sans-serif;">Aufgaben für Emil Zander</div>
<svg class="r" style="left:335px;top:1298px;" width="30" height="28" viewBox="0 0 30 28"><circle cx="15" cy="9" r="7.5" fill="#1a5b93"/><path d="M2 27 Q3 16 11 15 L19 15 Q27 16 28 27 Z" fill="#1a5b93"/></svg>
<svg class="r" style="left:8px;top:1345px;" width="28" height="27" viewBox="0 0 28 27"><rect x="1" y="3" width="26" height="23" fill="#1a5b93"/><rect x="1" y="3" width="26" height="5" fill="#1a5b93"/><rect x="6" y="0" width="3" height="6" fill="#1a5b93"/><rect x="19" y="0" width="3" height="6" fill="#1a5b93"/><rect x="3" y="10" width="3" height="2.5" fill="#f3f3f7"/><rect x="8" y="10" width="3" height="2.5" fill="#f3f3f7"/><rect x="13" y="10" width="3" height="2.5" fill="#f3f3f7"/><rect x="18" y="10" width="3" height="2.5" fill="#f3f3f7"/><rect x="23" y="10" width="3" height="2.5" fill="#f3f3f7"/><rect x="3" y="14" width="3" height="2.5" fill="#f3f3f7"/><rect x="8" y="14" width="3" height="2.5" fill="#f3f3f7"/><rect x="13" y="14" width="3" height="2.5" fill="#f3f3f7"/><rect x="18" y="14" width="3" height="2.5" fill="#f3f3f7"/><rect x="23" y="14" width="3" height="2.5" fill="#f3f3f7"/><rect x="3" y="18" width="3" height="2.5" fill="#f3f3f7"/><rect x="8" y="18" width="3" height="2.5" fill="#f3f3f7"/><rect x="13" y="18" width="3" height="2.5" fill="#f3f3f7"/><rect x="18" y="18" width="3" height="2.5" fill="#f3f3f7"/><rect x="23" y="18" width="3" height="2.5" fill="#f3f3f7"/><rect x="3" y="22" width="3" height="2.5" fill="#f3f3f7"/><rect x="8" y="22" width="3" height="2.5" fill="#f3f3f7"/><rect x="13" y="22" width="3" height="2.5" fill="#f3f3f7"/><rect x="18" y="22" width="3" height="2.5" fill="#f3f3f7"/><rect x="23" y="22" width="3" height="2.5" fill="#f3f3f7"/></svg>
<div class="t" style="left:48.0px;top:1350.2px;font-size:19.8px;color:#333;font-weight:700;font-family:'Liberation Sans',sans-serif;">06.08.2025</div>
<svg class="r" style="left:298px;top:1345px;" width="30" height="28" viewBox="0 0 30 28"><path d="M4 12 Q6 4 15 4 Q21 4 24 8 L27 5 L27 14 L18 14 L21 11 Q19 8 15 8 Q9 8 8 13 Z" fill="#1a5b93"/><path d="M26 16 Q24 24 15 24 Q9 24 6 20 L3 23 L3 14 L12 14 L9 17 Q11 20 15 20 Q21 20 22 15 Z" fill="#1a5b93"/></svg>
<svg class="r" style="left:335px;top:1345px;" width="28" height="28" viewBox="0 0 28 28"><g transform="translate(14,14)" fill="#1a5b93"><circle r="9"/><rect x="-3" y="-13.5" width="6" height="7" rx="1.5" transform="rotate(0)"/><rect x="-3" y="-13.5" width="6" height="7" rx="1.5" transform="rotate(45)"/><rect x="-3" y="-13.5" width="6" height="7" rx="1.5" transform="rotate(90)"/><rect x="-3" y="-13.5" width="6" height="7" rx="1.5" transform="rotate(135)"/><rect x="-3" y="-13.5" width="6" height="7" rx="1.5" transform="rotate(180)"/><rect x="-3" y="-13.5" width="6" height="7" rx="1.5" transform="rotate(225)"/><rect x="-3" y="-13.5" width="6" height="7" rx="1.5" transform="rotate(270)"/><rect x="-3" y="-13.5" width="6" height="7" rx="1.5" transform="rotate(315)"/></g><circle cx="14" cy="14" r="4" fill="#f3f3f7"/></svg>
<div class="r" style="left:0.0px;top:1394.0px;width:375.0px;height:389.0px;background:#2a4458;"></div>
<div class="t" style="left:7.0px;top:1401.3px;font-size:18.5px;color:#e8eef3;font-weight:400;font-family:'Liberation Sans',sans-serif;">Kontenstamm</div>
<div class="t" style="left:7.0px;top:1434.3px;font-size:18.5px;color:#e8eef3;font-weight:400;font-family:'Liberation Sans',sans-serif;">Kostenstelle (2)</div>
<div class="r" style="left:0px;top:108px;width:3016px;height:1675px;overflow:hidden;">
<div class="r" style="left:391.0px;top:0.0px;width:2625.0px;height:1675.0px;background:#2a4458;"></div>
<div class="r" style="left:389.5px;top:0.0px;width:1202.5px;height:916.0px;background:#dfe0e5;"></div>
<div class="r" style="left:396.0px;top:0.0px;width:1189.0px;height:904.0px;background:#f5f5fa;"></div>
<div class="r" style="left:399.0px;top:903.0px;width:1186.0px;height:2.0px;background:#8a8e95;"></div>
<div class="r" style="left:1584.0px;top:269.0px;width:1.5px;height:635.0px;background:#9aa0a8;"></div>
<div class="t" style="left:608.0px;top:-6.1px;font-size:19px;color:#5a5a5a;font-weight:400;font-family:'Liberation Sans',sans-serif;transform:translateX(-100%);">Belegnummer</div>
<div class="t" style="left:732.0px;top:-3.1px;font-size:19px;color:#222;font-weight:400;font-family:'Liberation Sans',sans-serif;">Lagerauftrag</div>
<div class="t" style="left:608.0px;top:32.4px;font-size:19px;color:#5a5a5a;font-weight:400;font-family:'Liberation Sans',sans-serif;transform:translateX(-100%);">Kunde</div>
<div class="t" style="left:608.0px;top:69.9px;font-size:19px;color:#5a5a5a;font-weight:400;font-family:'Liberation Sans',sans-serif;transform:translateX(-100%);">Fremdkommission</div>
<div class="t" style="left:608.0px;top:107.9px;font-size:19px;color:#5a5a5a;font-weight:400;font-family:'Liberation Sans',sans-serif;transform:translateX(-100%);">Kommissionsnummer</div>
<div class="r" style="left:396.0px;top:0.0px;width:1189.0px;height:3.0px;background:#f5f5fa;"></div>
<div class="r" style="left:1064.0px;top:-10.0px;width:183.0px;height:31.0px;background:#ffffff;border:1.5px solid #dcdce2;border-radius:3px;box-sizing:border-box;box-shadow:0 1px 1px #d0d0d6;"></div>
<div class="t" style="left:1155.5px;top:-3.2px;font-size:18px;color:#222;font-weight:400;font-family:'Liberation Sans',sans-serif;transform:translateX(-50%);">term/einplanen</div>
<div class="r" style="left:1263.0px;top:-10.0px;width:182.0px;height:31.0px;background:#ffffff;border:1.5px solid #dcdce2;border-radius:3px;box-sizing:border-box;box-shadow:0 1px 1px #d0d0d6;"></div>
<div class="t" style="left:1354.0px;top:-3.2px;font-size:18px;color:#222;font-weight:400;font-family:'Liberation Sans',sans-serif;transform:translateX(-50%);">disponieren</div>
<div class="r" style="left:1064.0px;top:27.0px;width:183.0px;height:33.0px;background:#ffffff;border:1.5px solid #dcdce2;border-radius:3px;box-sizing:border-box;box-shadow:0 1px 1px #d0d0d6;"></div>
<div class="t" style="left:1155.5px;top:35.8px;font-size:18px;color:#222;font-weight:400;font-family:'Liberation Sans',sans-serif;transform:translateX(-50%);">reservieren</div>
<div class="r" style="left:1263.0px;top:27.0px;width:182.0px;height:33.0px;background:#ffffff;border:1.5px solid #dcdce2;border-radius:3px;box-sizing:border-box;box-shadow:0 1px 1px #d0d0d6;"></div>
<div class="t" style="left:1354.0px;top:35.8px;font-size:18px;color:#222;font-weight:400;font-family:'Liberation Sans',sans-serif;transform:translateX(-50%);">reserv (Storno)</div>
<div class="r" style="left:1064.0px;top:66.0px;width:183.0px;height:32.0px;background:#ffffff;border:1.5px solid #dcdce2;border-radius:3px;box-sizing:border-box;box-shadow:0 1px 1px #d0d0d6;"></div>
<div class="t" style="left:1155.5px;top:73.8px;font-size:18px;color:#222;font-weight:400;font-family:'Liberation Sans',sans-serif;transform:translateX(-50%);">freigeben</div>
<div class="r" style="left:1263.0px;top:66.0px;width:182.0px;height:32.0px;background:#ffffff;border:1.5px solid #dcdce2;border-radius:3px;box-sizing:border-box;box-shadow:0 1px 1px #d0d0d6;"></div>
<div class="t" style="left:1354.0px;top:73.8px;font-size:18px;color:#222;font-weight:400;font-family:'Liberation Sans',sans-serif;transform:translateX(-50%);">rücksetzen</div>
<div class="r" style="left:1062.0px;top:109.0px;width:18.0px;height:18.0px;background:#f8f8fb;border:1.5px solid #d6d6dc;box-sizing:border-box;"></div>
<div class="t" style="left:1087.0px;top:109.8px;font-size:18px;color:#8a8a8f;font-weight:400;font-family:'Liberation Sans',sans-serif;">Freigabe Kommir</div>
<div class="r" style="left:399.0px;top:244.0px;width:1.0px;height:1.0px;background:transparent;"></div>
<div class="r" style="left:399.0px;top:244.0px;width:106.0px;height:25.0px;background:#a9c0d3;"></div>
<div class="r" style="left:505.0px;top:244.0px;width:3.0px;height:25.0px;background:#333a44;"></div>
<div class="t" style="left:407.0px;top:248.2px;font-size:17.5px;color:#46555f;font-weight:400;font-family:'Liberation Sans',sans-serif;">Basisdaten</div>
<div class="t" style="left:522.0px;top:249.2px;font-size:17.5px;color:#222;font-weight:700;font-family:'Liberation Sans',sans-serif;">Termine und Mengen</div>
<div class="r" style="left:710.0px;top:244.0px;width:3.0px;height:25.0px;background:#333a44;"></div>
<div class="r" style="left:713.0px;top:244.0px;width:126.0px;height:25.0px;background:#a9c0d3;"></div>
<div class="r" style="left:838.0px;top:244.0px;width:3.0px;height:25.0px;background:#333a44;"></div>
<div class="t" style="left:727.0px;top:248.2px;font-size:17.5px;color:#46555f;font-weight:400;font-family:'Liberation Sans',sans-serif;text-decoration:underline;text-decoration-thickness:1px;">Zusatzdaten</div>
<div class="r" style="left:841.0px;top:244.0px;width:116.0px;height:25.0px;background:#a9c0d3;"></div>
<div class="r" style="left:957.0px;top:244.0px;width:3.0px;height:25.0px;background:#333a44;"></div>
<div class="t" style="left:853.0px;top:248.2px;font-size:17.5px;color:#46555f;font-weight:400;font-family:'Liberation Sans',sans-serif;">Traceability</div>
<div class="r" style="left:960.0px;top:244.0px;width:147.0px;height:25.0px;background:#a9c0d3;"></div>
<div class="r" style="left:1107.0px;top:244.0px;width:3.0px;height:25.0px;background:#333a44;"></div>
<div class="t" style="left:969.0px;top:248.2px;font-size:17.5px;color:#46555f;font-weight:400;font-family:'Liberation Sans',sans-serif;">Instandhaltung</div>
<div class="r" style="left:1110.0px;top:244.0px;width:55.0px;height:25.0px;background:#a9c0d3;"></div>
<div class="r" style="left:1164.0px;top:244.0px;width:3.0px;height:25.0px;background:#333a44;"></div>
<div class="t" style="left:1121.0px;top:248.2px;font-size:17.5px;color:#46555f;font-weight:400;font-family:'Liberation Sans',sans-serif;">Info</div>
<div class="t" style="left:599.0px;top:287.9px;font-size:19px;color:#5a5a5a;font-weight:400;font-family:'Liberation Sans',sans-serif;transform:translateX(-100%);">Wunschtermin</div>
<div class="t" style="left:608.0px;top:289.8px;font-size:18px;color:#222;font-weight:400;font-family:'Liberation Sans',sans-serif;letter-spacing:-0.4px;">23.09.2025</div>
<div class="t" style="left:722.0px;top:288.9px;font-size:19px;color:#222;font-weight:400;font-family:'Liberation Sans',sans-serif;">Di</div>
<div class="r" style="left:768.0px;top:284.0px;width:71.0px;height:31.0px;background:#fbfbfd;"></div>
<div class="t" style="left:772.0px;top:291.3px;font-size:18.5px;color:#888;font-weight:400;font-family:'Liberation Sans',sans-serif;">k.B.</div>
<svg class="r" style="left:821px;top:295px;" width="12" height="8" viewBox="0 0 12 8"><path d="M1 1 L6 6 L11 1" fill="none" stroke="#c8c8cc" stroke-width="1.5"/></svg>
<div class="t" style="left:599.0px;top:324.9px;font-size:19px;color:#5a5a5a;font-weight:400;font-family:'Liberation Sans',sans-serif;transform:translateX(-100%);">Wunschstarttermin</div>
<div class="r" style="left:768.0px;top:321.0px;width:71.0px;height:28.0px;background:#fbfbfd;"></div>
<div class="t" style="left:772.0px;top:325.3px;font-size:18.5px;color:#888;font-weight:400;font-family:'Liberation Sans',sans-serif;">k.B.</div>
<svg class="r" style="left:821px;top:331px;" width="12" height="8" viewBox="0 0 12 8"><path d="M1 1 L6 6 L11 1" fill="none" stroke="#c8c8cc" stroke-width="1.5"/></svg>
<div class="t" style="left:599.0px;top:363.9px;font-size:19px;color:#5a5a5a;font-weight:400;font-family:'Liberation Sans',sans-serif;transform:translateX(-100%);">Endtermin</div>
<div class="t" style="left:608.0px;top:365.8px;font-size:18px;color:#222;font-weight:400;font-family:'Liberation Sans',sans-serif;letter-spacing:-0.4px;">22.09.2025</div>
<div class="t" style="left:722.0px;top:364.9px;font-size:19px;color:#222;font-weight:400;font-family:'Liberation Sans',sans-serif;">Mo</div>
<div class="t" style="left:599.0px;top:419.9px;font-size:19px;color:#5a5a5a;font-weight:400;font-family:'Liberation Sans',sans-serif;transform:translateX(-100%);">Produktionsmenge</div>
<div class="t" style="left:719.0px;top:421.3px;font-size:18.5px;color:#222;font-weight:400;font-family:'Liberation Sans',sans-serif;">20</div>
<div class="t" style="left:836.0px;top:421.3px;font-size:18.5px;color:#222;font-weight:400;font-family:'Liberation Sans',sans-serif;">Stk</div>
<div class="t" style="left:599.0px;top:457.9px;font-size:19px;color:#5a5a5a;font-weight:400;font-family:'Liberation Sans',sans-serif;transform:translateX(-100%);">Entnahmemenge</div>
<div class="t" style="left:719.0px;top:459.3px;font-size:18.5px;color:#222;font-weight:400;font-family:'Liberation Sans',sans-serif;">0</div>
<div class="t" style="left:836.0px;top:459.3px;font-size:18.5px;color:#222;font-weight:400;font-family:'Liberation Sans',sans-serif;">Stk</div>
<div class="t" style="left:599.0px;top:494.9px;font-size:19px;color:#5a5a5a;font-weight:400;font-family:'Liberation Sans',sans-serif;transform:translateX(-100%);">Anfahrausschuss</div>
<div class="t" style="left:719.0px;top:496.3px;font-size:18.5px;color:#222;font-weight:400;font-family:'Liberation Sans',sans-serif;">0</div>
<div class="t" style="left:836.0px;top:496.3px;font-size:18.5px;color:#222;font-weight:400;font-family:'Liberation Sans',sans-serif;">Stk</div>
<div class="t" style="left:599.0px;top:552.9px;font-size:19px;color:#5a5a5a;font-weight:400;font-family:'Liberation Sans',sans-serif;transform:translateX(-100%);">Berech Fertigmenge</div>
<div class="r" style="left:608.0px;top:550.0px;width:371.0px;height:26.0px;background:#fbfbfd;"></div>
<div class="t" style="left:612.0px;top:552.3px;font-size:18.5px;color:#888;font-weight:400;font-family:'Liberation Sans',sans-serif;">Mittelwert gefertigte Kuppelprodukte</div>
<svg class="r" style="left:961px;top:559px;" width="12" height="8" viewBox="0 0 12 8"><path d="M1 1 L6 6 L11 1" fill="none" stroke="#c8c8cc" stroke-width="1.5"/></svg>
<div class="t" style="left:599.0px;top:589.9px;font-size:19px;color:#5a5a5a;font-weight:400;font-family:'Liberation Sans',sans-serif;transform:translateX(-100%);">Durchlaufzeit</div>
<div class="t" style="left:617.0px;top:591.3px;font-size:18.5px;color:#222;font-weight:400;font-family:'Liberation Sans',sans-serif;">3</div>
<div class="r" style="left:682.0px;top:586.0px;width:87.0px;height:28.0px;background:#fbfbfd;"></div>
<div class="t" style="left:686.0px;top:590.3px;font-size:18.5px;color:#888;font-weight:400;font-family:'Liberation Sans',sans-serif;">KTg</div>
<svg class="r" style="left:751px;top:596px;" width="12" height="8" viewBox="0 0 12 8"><path d="M1 1 L6 6 L11 1" fill="none" stroke="#c8c8cc" stroke-width="1.5"/></svg>
<div class="t" style="left:599.0px;top:627.9px;font-size:19px;color:#5a5a5a;font-weight:400;font-family:'Liberation Sans',sans-serif;transform:translateX(-100%);">DLZ krit Pfad</div>
<div class="t" style="left:664.0px;top:628.9px;font-size:19px;color:#222;font-weight:400;font-family:'Liberation Mono',sans-serif;">35,83</div>
<div class="t" style="left:760.0px;top:629.3px;font-size:18.5px;color:#222;font-weight:400;font-family:'Liberation Sans',sans-serif;">Std</div>
<div class="t" style="left:599.0px;top:665.9px;font-size:19px;color:#5a5a5a;font-weight:400;font-family:'Liberation Sans',sans-serif;transform:translateX(-100%);">Priorität</div>
<div class="t" style="left:613.0px;top:667.3px;font-size:18.5px;color:#222;font-weight:400;font-family:'Liberation Sans',sans-serif;">4</div>
<div class="t" style="left:648.0px;top:666.9px;font-size:19px;color:#222;font-weight:400;font-family:'Liberation Sans',sans-serif;">Lagerauftrag</div>
<div class="t" style="left:1165.0px;top:288.9px;font-size:19px;color:#5a5a5a;font-weight:400;font-family:'Liberation Sans',sans-serif;transform:translateX(-100%);">TerminierungsKz</div>
<div class="r" style="left:1175.0px;top:284.0px;width:215.0px;height:31.0px;background:#fbfbfd;"></div>
<div class="t" style="left:1179.0px;top:291.3px;font-size:18.5px;color:#888;font-weight:400;font-family:'Liberation Sans',sans-serif;">Optimierung</div>
<svg class="r" style="left:1372px;top:295px;" width="12" height="8" viewBox="0 0 12 8"><path d="M1 1 L6 6 L11 1" fill="none" stroke="#c8c8cc" stroke-width="1.5"/></svg>
<div class="t" style="left:1165.0px;top:324.9px;font-size:19px;color:#5a5a5a;font-weight:400;font-family:'Liberation Sans',sans-serif;transform:translateX(-100%);">Optimierungsziel</div>
<div class="r" style="left:1175.0px;top:321.0px;width:215.0px;height:28.0px;background:#fbfbfd;"></div>
<div class="t" style="left:1179.0px;top:325.3px;font-size:18.5px;color:#888;font-weight:400;font-family:'Liberation Sans',sans-serif;">Wunschtermin</div>
<svg class="r" style="left:1372px;top:331px;" width="12" height="8" viewBox="0 0 12 8"><path d="M1 1 L6 6 L11 1" fill="none" stroke="#c8c8cc" stroke-width="1.5"/></svg>
<div class="t" style="left:1165.0px;top:363.9px;font-size:19px;color:#5a5a5a;font-weight:400;font-family:'Liberation Sans',sans-serif;transform:translateX(-100%);">Termin man Opt</div>
<div class="t" style="left:1364.0px;top:364.9px;font-size:19px;color:#222;font-weight:400;font-family:'Liberation Sans',sans-serif;">Di</div>
<div class="t" style="left:1165.0px;top:401.9px;font-size:19px;color:#5a5a5a;font-weight:400;font-family:'Liberation Sans',sans-serif;transform:translateX(-100%);">Überlast</div>
<div class="t" style="left:1175.0px;top:402.9px;font-size:19px;color:#222;font-weight:400;font-family:'Liberation Sans',sans-serif;">ohne</div>
<div class="r" style="left:1172.0px;top:459.0px;width:18.0px;height:18.0px;background:#f8f8fb;border:1.5px solid #d6d6dc;box-sizing:border-box;"></div>
<div class="t" style="left:1196.0px;top:459.8px;font-size:18px;color:#8a8a8f;font-weight:400;font-family:'Liberation Sans',sans-serif;">Res gelöscht</div>
<div class="r" style="left:1172.0px;top:497.0px;width:18.0px;height:18.0px;background:#f8f8fb;border:1.5px solid #d6d6dc;box-sizing:border-box;border-radius:3px;"></div>
<div class="t" style="left:1196.0px;top:496.8px;font-size:18px;color:#8a8a8f;font-weight:400;font-family:'Liberation Sans',sans-serif;">tr - neu</div>
<div class="t" style="left:1165.0px;top:551.9px;font-size:19px;color:#5a5a5a;font-weight:400;font-family:'Liberation Sans',sans-serif;transform:translateX(-100%);">%Adressmatrix</div>
<div class="t" style="left:1175.0px;top:553.8px;font-size:18px;color:#222;font-weight:400;font-family:'Liberation Mono',sans-serif;">100,00%</div>
<div class="t" style="left:1165.0px;top:589.9px;font-size:19px;color:#5a5a5a;font-weight:400;font-family:'Liberation Sans',sans-serif;transform:translateX(-100%);">%Platzmatrix</div>
<div class="t" style="left:1175.0px;top:591.8px;font-size:18px;color:#222;font-weight:400;font-family:'Liberation Mono',sans-serif;">100,00%</div>
<div class="t" style="left:1165.0px;top:627.9px;font-size:19px;color:#5a5a5a;font-weight:400;font-family:'Liberation Sans',sans-serif;transform:translateX(-100%);">%Wartezeit</div>
<div class="t" style="left:1175.0px;top:629.8px;font-size:18px;color:#222;font-weight:400;font-family:'Liberation Mono',sans-serif;">100,00%</div>
<div class="r" style="left:2991.0px;top:368.0px;width:25.0px;height:1276.0px;background:#4e667c;"></div>
<div class="r" style="left:2998.0px;top:1003.0px;width:10.0px;height:2.0px;background:#8596a6;"></div>
<div class="r" style="left:2998.0px;top:1007.0px;width:10.0px;height:2.0px;background:#8596a6;"></div>
<div class="r" style="left:2998.0px;top:1011.0px;width:10.0px;height:2.0px;background:#8596a6;"></div>
<div class="r" style="left:2999.0px;top:13.0px;width:8.0px;height:6.0px;background:#4e667c;"></div>
<div class="r" style="left:1592.0px;top:0.0px;width:1424.0px;height:2.0px;background:#25394a;"></div>
</div>
<div class="r" style="left:385.0px;top:1019.0px;width:1207.0px;height:5.0px;background:#1f2e3b;"></div>
<div class="r" style="left:1592.0px;top:1022.5px;width:1365.0px;height:1.5px;background:#1f2a36;"></div>
<div class="r" style="left:389.5px;top:1024.0px;width:2562.5px;height:43.0px;background:linear-gradient(180deg,#ac6a7d 0%,#b8658a 55%,#ae6a7f 100%);"></div>
<div class="t" style="left:400.0px;top:1034.1px;font-size:20px;color:#fbeff3;font-weight:400;font-family:'Liberation Sans',sans-serif;">Prozessgantt (Struktur) LA-80213108 15533</div>
<svg class="r" style="left:2837px;top:1037px;" width="28" height="20" viewBox="0 0 28 20"><rect x="2" y="8" width="12" height="10" fill="none" stroke="#fff" stroke-width="3"/><path d="M8 7 L8 2 L25 2 L25 12 L16 12" fill="none" stroke="#fff" stroke-width="3"/></svg>
<svg class="r" style="left:2878px;top:1037px;" width="24" height="20" viewBox="0 0 24 20"><rect x="2.5" y="2.5" width="18" height="15" fill="none" stroke="#fff" stroke-width="4"/></svg>
<svg class="r" style="left:2920px;top:1036px;" width="24" height="22" viewBox="0 0 24 22"><path d="M3 3 L21 19 M21 3 L3 19" stroke="#fff" stroke-width="4.5"/></svg>
<div class="r" style="left:389.5px;top:1067.0px;width:2562.5px;height:88.0px;background:#cfd8e2;"></div>
<div class="r" style="left:389.5px;top:1067.0px;width:2562.5px;height:2.5px;background:#e2e2e8;"></div>
<div class="t" style="left:406.0px;top:1079.3px;font-size:17.4px;color:#333;font-weight:400;font-family:'Liberation Sans',sans-serif;">Datei</div>
<div class="t" style="left:464.0px;top:1079.3px;font-size:17.4px;color:#333;font-weight:400;font-family:'Liberation Sans',sans-serif;">Funktion</div>
<div class="t" style="left:553.0px;top:1079.3px;font-size:17.4px;color:#333;font-weight:400;font-family:'Liberation Sans',sans-serif;">Extras</div>
<div class="t" style="left:618.0px;top:1079.3px;font-size:17.4px;color:#333;font-weight:400;font-family:'Liberation Sans',sans-serif;">Info</div>
<svg class="r" style="left:405px;top:1111px;" width="28" height="30" viewBox="0 0 28 30"><rect x="3" y="3" width="3.5" height="24" fill="#4a5560"/><rect x="11" y="3" width="4" height="24" fill="#e02040"/><rect x="20" y="3" width="3.5" height="24" fill="#4a5560"/></svg>
<svg class="r" style="left:444px;top:1111px;" width="28" height="30" viewBox="0 0 28 30"><rect x="3" y="3" width="3.5" height="24" fill="#4a5560"/><rect x="11" y="3" width="4" height="24" fill="#3aa83a"/><rect x="20" y="3" width="3.5" height="24" fill="#4a5560"/></svg>
<svg class="r" style="left:484px;top:1111px;" width="28" height="30" viewBox="0 0 28 30"><rect x="3" y="3" width="3.5" height="24" fill="#4a5560"/><rect x="11" y="3" width="4" height="24" fill="#3a90d8"/><rect x="20" y="3" width="3.5" height="24" fill="#4a5560"/></svg>
<svg class="r" style="left:522px;top:1111px;" width="28" height="28" viewBox="0 0 28 28"><g fill="#3a4a58"><path d="M1 1 L9 1 L1 9 Z"/><path d="M27 1 L19 1 L27 9 Z"/><path d="M1 27 L9 27 L1 19 Z"/><path d="M27 27 L19 27 L27 19 Z"/><rect x="9" y="9" width="10" height="10"/></g></svg>
<svg class="r" style="left:561px;top:1110px;" width="30" height="30" viewBox="0 0 30 30"><circle cx="15" cy="15" r="9" fill="none" stroke="#3a4a58" stroke-width="2.5"/><path d="M15 1 L12 5 L18 5 Z M15 29 L12 25 L18 25 Z M1 15 L5 12 L5 18 Z M29 15 L25 12 L25 18 Z" fill="#3a4a58"/><path d="M10 15 L20 15 M15 10 L15 20" stroke="#3aa030" stroke-width="3"/></svg>
<svg class="r" style="left:600px;top:1110px;" width="30" height="30" viewBox="0 0 30 30"><circle cx="15" cy="15" r="9" fill="none" stroke="#3a4a58" stroke-width="2.5"/><path d="M15 1 L12 5 L18 5 Z M15 29 L12 25 L18 25 Z M1 15 L5 12 L5 18 Z M29 15 L25 12 L25 18 Z" fill="#3a4a58"/><path d="M9 15 L21 15" stroke="#e02040" stroke-width="3"/></svg>
<svg class="r" style="left:640px;top:1110px;" width="30" height="30" viewBox="0 0 30 30"><circle cx="15" cy="15" r="9" fill="none" stroke="#3a4a58" stroke-width="2.5"/><path d="M15 1 L12 5 L18 5 Z M15 29 L12 25 L18 25 Z M1 15 L5 12 L5 18 Z M29 15 L25 12 L25 18 Z" fill="#3a4a58"/><circle cx="15" cy="15" r="4" fill="#3a4a58"/></svg>
<svg class="r" style="left:680px;top:1110px;" width="30" height="30" viewBox="0 0 30 30"><circle cx="15" cy="15" r="9" fill="none" stroke="#3a4a58" stroke-width="2.5"/><path d="M15 1 L12 5 L18 5 Z M15 29 L12 25 L18 25 Z M1 15 L5 12 L5 18 Z M29 15 L25 12 L25 18 Z" fill="#3a4a58"/><circle cx="15" cy="15" r="4" fill="#3a4a58"/></svg>
<svg class="r" style="left:719px;top:1110px;" width="30" height="30" viewBox="0 0 30 30"><path d="M4 13 Q6 5 15 5 Q21 5 24 9 L27 6 L27 15 L18 15 L21 12 Q19 9 15 9 Q9 9 8 14 Z" fill="#3a4a58"/><path d="M26 17 Q24 25 15 25 Q9 25 6 21 L3 24 L3 15 L12 15 L9 18 Q11 21 15 21 Q21 21 22 16 Z" fill="#3a4a58"/></svg>
<div class="r" style="left:753.0px;top:1107.0px;width:91.0px;height:36.0px;background:#ffffff;"></div>
<div class="t" style="left:763.0px;top:1117.9px;font-size:19px;color:#222;font-weight:400;font-family:'Liberation Sans',sans-serif;">156%</div>
<div class="r" style="left:844.0px;top:1107.0px;width:20.0px;height:36.0px;background:#e4e6ea;"></div>
<svg class="r" style="left:847px;top:1121px;" width="14" height="8" viewBox="0 0 14 8"><path d="M1 1 L13 1 L7 7 Z" fill="#222"/></svg>
<div class="r" style="left:869.0px;top:1108.0px;width:127.0px;height:34.0px;background:linear-gradient(#f2f2f4,#e2e2e6);border:1.5px solid #8c8c90;box-sizing:border-box;"></div>
<div class="t" style="left:875.0px;top:1116.9px;font-size:19px;color:#333;font-weight:400;font-family:'Liberation Sans',sans-serif;">Tage</div>
<svg class="r" style="left:974px;top:1121px;" width="14" height="8" viewBox="0 0 14 8"><path d="M1 1 L13 1 L7 7 Z" fill="#222"/></svg>
<svg class="r" style="left:1935px;top:1112px;" width="30" height="28" viewBox="0 0 30 28"><rect x="8" y="1" width="14" height="8" fill="#3a4a58"/><rect x="1" y="9" width="28" height="12" rx="2" fill="#3a4a58"/><rect x="6" y="17" width="18" height="10" fill="#3a4a58"/><rect x="8" y="20" width="14" height="1.5" fill="#cfd8e2"/><rect x="8" y="23" width="14" height="1.5" fill="#cfd8e2"/></svg>
<svg class="r" style="left:1975px;top:1115px;" width="30" height="22" viewBox="0 0 30 22"><rect x="1" y="1" width="28" height="20" fill="#3a4a58"/><path d="M2 2 L15 12 L28 2" fill="none" stroke="#cfd8e2" stroke-width="2"/><path d="M2 20 L11 11 M28 20 L19 11" stroke="#cfd8e2" stroke-width="1.5"/></svg>
<div class="r" style="left:389.5px;top:1155.0px;width:2556.5px;height:628.0px;background:#f5f6fa;"></div>
<div class="r" style="left:2946.0px;top:1155.0px;width:6.0px;height:628.0px;background:#dcdde3;"></div>
<div class="t" style="left:598.0px;top:1167.8px;font-size:18px;color:#555;font-weight:400;font-family:'Liberation Sans',sans-serif;transform:translateX(-100%);">Teil</div>
<div class="t" style="left:598.0px;top:1206.8px;font-size:18px;color:#555;font-weight:400;font-family:'Liberation Sans',sans-serif;transform:translateX(-100%);">Bezeichnung</div>
<div class="t" style="left:900.0px;top:1168.8px;font-size:18px;color:#555;font-weight:400;font-family:'Liberation Sans',sans-serif;">RMNr</div>
<div class="t" style="left:1316.0px;top:1168.8px;font-size:18px;color:#555;font-weight:400;font-family:'Liberation Sans',sans-serif;transform:translateX(-100%);">Aktivität</div>
<div class="t" style="left:1316.0px;top:1206.8px;font-size:18px;color:#555;font-weight:400;font-family:'Liberation Sans',sans-serif;transform:translateX(-100%);">Bezeichnung</div>
<div class="t" style="left:1789.0px;top:1168.8px;font-size:18px;color:#555;font-weight:400;font-family:'Liberation Sans',sans-serif;transform:translateX(-100%);">Start</div>
<div class="t" style="left:1789.0px;top:1206.8px;font-size:18px;color:#555;font-weight:400;font-family:'Liberation Sans',sans-serif;transform:translateX(-100%);">Ende</div>
<div class="t" style="left:2119.0px;top:1168.7px;font-size:18.1px;color:#555;font-weight:400;font-family:'Liberation Sans',sans-serif;transform:translateX(-100%);">Bedarfsmenge</div>
<div class="t" style="left:2119.0px;top:1206.7px;font-size:18.1px;color:#555;font-weight:400;font-family:'Liberation Sans',sans-serif;transform:translateX(-100%);">offene Menge</div>
<div class="r" style="left:398.0px;top:1249.0px;width:401.0px;height:534.0px;background:#ffffff;"></div>
<div class="r" style="left:398.0px;top:1249.0px;width:401.0px;height:132.0px;background:#e7e8ef;"></div>
<div class="r" style="left:398.0px;top:1381.0px;width:401.0px;height:147.0px;background:#8eb0cf;"></div>
<div class="r" style="left:398.0px;top:1528.0px;width:401.0px;height:184.0px;background:#efeff2;"></div>
<div class="r" style="left:397.0px;top:1249.0px;width:2.0px;height:463.0px;background:#111;"></div>
<div class="r" style="left:459.0px;top:1249.0px;width:2.0px;height:463.0px;background:#111;"></div>
<div class="r" style="left:520.0px;top:1249.0px;width:2.0px;height:463.0px;background:#111;"></div>
<div class="r" style="left:582.0px;top:1249.0px;width:2.0px;height:463.0px;background:#111;"></div>
<div class="r" style="left:667.0px;top:1249.0px;width:2.0px;height:463.0px;background:#111;"></div>
<div class="r" style="left:728.0px;top:1249.0px;width:2.0px;height:463.0px;background:#111;"></div>
<div class="r" style="left:797.0px;top:1249.0px;width:2.0px;height:463.0px;background:#111;"></div>
<div class="r" style="left:398.0px;top:1248.0px;width:401.0px;height:2.0px;background:#111;"></div>
<div class="r" style="left:398.0px;top:1379.0px;width:401.0px;height:3.0px;background:#111;"></div>
<div class="r" style="left:398.0px;top:1526.0px;width:401.0px;height:2.0px;background:#111;"></div>
<div class="r" style="left:398.0px;top:1618.0px;width:401.0px;height:2.0px;background:#111;"></div>
<div class="r" style="left:398.0px;top:1710.0px;width:401.0px;height:2.0px;background:#111;"></div>
<div class="t" style="left:435.0px;top:1297.0px;font-size:35px;color:#111;font-weight:700;font-family:'Liberation Sans',sans-serif;transform:translateX(-50%);">St</div>
<div class="t" style="left:495.0px;top:1297.0px;font-size:35px;color:#111;font-weight:700;font-family:'Liberation Sans',sans-serif;transform:translateX(-50%);">ZF</div>
<div class="t" style="left:557.0px;top:1297.0px;font-size:35px;color:#111;font-weight:700;font-family:'Liberation Sans',sans-serif;transform:translateX(-50%);">ZF</div>
<div class="t" style="left:631.5px;top:1297.0px;font-size:35px;color:#111;font-weight:700;font-family:'Liberation Sans',sans-serif;transform:translateX(-50%);">TA</div>
<div class="t" style="left:705.0px;top:1297.0px;font-size:35px;color:#111;font-weight:700;font-family:'Liberation Sans',sans-serif;transform:translateX(-50%);">R</div>
<div class="t" style="left:429.0px;top:1435.4px;font-size:35px;color:#111;font-weight:700;font-family:'Liberation Sans',sans-serif;transform:translateX(-50%);">-</div>
<svg class="r" style="left:471px;top:1436px;" width="38" height="38" viewBox="0 0 38 38"><defs><radialGradient id="gc" cx="40%" cy="35%" r="70%"><stop offset="0" stop-color="#5cdc1c"/><stop offset="1" stop-color="#359e12"/></radialGradient></defs><circle cx="19" cy="19" r="18" fill="url(#gc)"/><path d="M10 19 L16 25 L28 12" fill="none" stroke="#fff" stroke-width="4.5"/></svg>
<svg class="r" style="left:533px;top:1436px;" width="37" height="38" viewBox="0 0 37 38"><defs><linearGradient id="gi" x1="0" y1="0" x2="0" y2="1"><stop offset="0" stop-color="#3aacf6"/><stop offset="1" stop-color="#1a80d6"/></linearGradient></defs><rect x="3" y="3" width="32" height="32" rx="1" fill="url(#gi)"/><circle cx="18.5" cy="9" r="3.5" fill="#fff"/><path d="M11 15 L22 15 L22 29 L26 29 L26 33 L11 33 L11 29 L15 29 L15 19 L11 19 Z" fill="#fff"/></svg>
<div class="t" style="left:630.0px;top:1436.4px;font-size:35px;color:#111;font-weight:700;font-family:'Liberation Sans',sans-serif;transform:translateX(-50%);">9</div>
<div class="t" style="left:742.0px;top:1436.4px;font-size:35px;color:#111;font-weight:700;font-family:'Liberation Sans',sans-serif;">PPA</div>
<svg class="r" style="left:533px;top:1556px;" width="38" height="38" viewBox="0 0 38 38"><defs><radialGradient id="gc" cx="40%" cy="35%" r="70%"><stop offset="0" stop-color="#5cdc1c"/><stop offset="1" stop-color="#359e12"/></radialGradient></defs><circle cx="19" cy="19" r="18" fill="url(#gc)"/><path d="M10 19 L16 25 L28 12" fill="none" stroke="#fff" stroke-width="4.5"/></svg>
<div class="t" style="left:631.0px;top:1556.4px;font-size:35px;color:#111;font-weight:700;font-family:'Liberation Sans',sans-serif;transform:translateX(-50%);">10</div>
<div class="t" style="left:742.0px;top:1556.4px;font-size:35px;color:#111;font-weight:700;font-family:'Liberation Sans',sans-serif;">PPA</div>
<div class="t" style="left:429.0px;top:1648.4px;font-size:35px;color:#111;font-weight:700;font-family:'Liberation Sans',sans-serif;transform:translateX(-50%);">+</div>
<svg class="r" style="left:533px;top:1647px;" width="37" height="38" viewBox="0 0 37 38"><defs><linearGradient id="gi" x1="0" y1="0" x2="0" y2="1"><stop offset="0" stop-color="#3aacf6"/><stop offset="1" stop-color="#1a80d6"/></linearGradient></defs><rect x="3" y="3" width="32" height="32" rx="1" fill="url(#gi)"/><circle cx="18.5" cy="9" r="3.5" fill="#fff"/><path d="M11 15 L22 15 L22 29 L26 29 L26 33 L11 33 L11 29 L15 29 L15 19 L11 19 Z" fill="#fff"/></svg>
<div class="t" style="left:630.0px;top:1648.4px;font-size:35px;color:#111;font-weight:700;font-family:'Liberation Sans',sans-serif;transform:translateX(-50%);">6</div>
<div class="t" style="left:704.0px;top:1648.4px;font-size:35px;color:#111;font-weight:700;font-family:'Liberation Sans',sans-serif;transform:translateX(-50%);">X</div>
<div class="t" style="left:742.0px;top:1648.4px;font-size:35px;color:#111;font-weight:700;font-family:'Liberation Sans',sans-serif;">PPA</div>
<div class="r" style="left:800.0px;top:1249.0px;width:6.0px;height:534.0px;background:#f5f6fa;"></div>
<div class="r" style="left:798.0px;top:1249.0px;width:2.0px;height:534.0px;background:#111;"></div>
<div class="r" style="left:806px;top:1249px;width:2112px;height:534px;overflow:hidden;background:#ffffff;">
<div class="r" style="left:0.0px;top:0.0px;width:2112.0px;height:131.0px;background:#e8e9f2;"></div>
<div class="r" style="left:-9.9px;top:132.0px;width:71.9px;height:146.0px;background:#dcdcdf;"></div>
<div class="r" style="left:-9.9px;top:279.0px;width:71.9px;height:91.0px;background:#dcdcdf;"></div>
<div class="r" style="left:-9.9px;top:371.0px;width:71.9px;height:91.0px;background:#dcdcdf;"></div>
<div class="r" style="left:241.8px;top:132.0px;width:71.9px;height:146.0px;background:#dcdcdf;"></div>
<div class="r" style="left:241.8px;top:279.0px;width:71.9px;height:91.0px;background:#dcdcdf;"></div>
<div class="r" style="left:241.8px;top:371.0px;width:71.9px;height:91.0px;background:#dcdcdf;"></div>
<div class="r" style="left:493.4px;top:132.0px;width:71.9px;height:146.0px;background:#dcdcdf;"></div>
<div class="r" style="left:493.4px;top:279.0px;width:71.9px;height:91.0px;background:#dcdcdf;"></div>
<div class="r" style="left:493.4px;top:371.0px;width:71.9px;height:91.0px;background:#dcdcdf;"></div>
<div class="r" style="left:745.1px;top:132.0px;width:71.9px;height:146.0px;background:#dcdcdf;"></div>
<div class="r" style="left:745.1px;top:279.0px;width:71.9px;height:91.0px;background:#dcdcdf;"></div>
<div class="r" style="left:745.1px;top:371.0px;width:71.9px;height:91.0px;background:#dcdcdf;"></div>
<div class="r" style="left:996.8px;top:132.0px;width:71.9px;height:146.0px;background:#dcdcdf;"></div>
<div class="r" style="left:996.8px;top:279.0px;width:71.9px;height:91.0px;background:#dcdcdf;"></div>
<div class="r" style="left:996.8px;top:371.0px;width:71.9px;height:91.0px;background:#dcdcdf;"></div>
<div class="r" style="left:1248.4px;top:132.0px;width:71.9px;height:146.0px;background:#dcdcdf;"></div>
<div class="r" style="left:1248.4px;top:279.0px;width:71.9px;height:91.0px;background:#dcdcdf;"></div>
<div class="r" style="left:1248.4px;top:371.0px;width:71.9px;height:91.0px;background:#dcdcdf;"></div>
<div class="r" style="left:1500.1px;top:132.0px;width:71.9px;height:146.0px;background:#dcdcdf;"></div>
<div class="r" style="left:1500.1px;top:279.0px;width:71.9px;height:91.0px;background:#dcdcdf;"></div>
<div class="r" style="left:1500.1px;top:371.0px;width:71.9px;height:91.0px;background:#dcdcdf;"></div>
<div class="r" style="left:1751.7px;top:132.0px;width:71.9px;height:146.0px;background:#dcdcdf;"></div>
<div class="r" style="left:1751.7px;top:279.0px;width:71.9px;height:91.0px;background:#dcdcdf;"></div>
<div class="r" style="left:1751.7px;top:371.0px;width:71.9px;height:91.0px;background:#dcdcdf;"></div>
<div class="r" style="left:2003.4px;top:132.0px;width:71.9px;height:146.0px;background:#dcdcdf;"></div>
<div class="r" style="left:2003.4px;top:279.0px;width:71.9px;height:91.0px;background:#dcdcdf;"></div>
<div class="r" style="left:2003.4px;top:371.0px;width:71.9px;height:91.0px;background:#dcdcdf;"></div>
<div class="r" style="left:61.5px;top:132px;width:0;height:402px;border-left:1.5px dashed #9c9ca0;"></div>
<div class="r" style="left:313.2px;top:132px;width:0;height:402px;border-left:1.5px dashed #9c9ca0;"></div>
<div class="r" style="left:564.8px;top:132px;width:0;height:402px;border-left:1.5px dashed #9c9ca0;"></div>
<div class="r" style="left:816.5px;top:132px;width:0;height:402px;border-left:1.5px dashed #9c9ca0;"></div>
<div class="r" style="left:1068.2px;top:132px;width:0;height:402px;border-left:1.5px dashed #9c9ca0;"></div>
<div class="r" style="left:1319.8px;top:132px;width:0;height:402px;border-left:1.5px dashed #9c9ca0;"></div>
<div class="r" style="left:1571.5px;top:132px;width:0;height:402px;border-left:1.5px dashed #9c9ca0;"></div>
<div class="r" style="left:1823.1px;top:132px;width:0;height:402px;border-left:1.5px dashed #9c9ca0;"></div>
<div class="r" style="left:2074.8px;top:132px;width:0;height:402px;border-left:1.5px dashed #9c9ca0;"></div>
<div class="r" style="left:636.5px;top:132.0px;width:1.5px;height:402.0px;background:#666;"></div>
<div class="r" style="left:1751.0px;top:132.0px;width:1.5px;height:402.0px;background:#666;"></div>
<div class="r" style="left:636.2px;top:0.0px;width:2.0px;height:63.0px;background:#111;"></div>
<div class="r" style="left:1750.7px;top:0.0px;width:2.0px;height:63.0px;background:#111;"></div>
<div class="r" style="left:0.0px;top:0.0px;width:2112.0px;height:2.0px;background:#111;"></div>
<div class="r" style="left:0.0px;top:62.0px;width:2112.0px;height:2.0px;background:#111;"></div>
<div class="r" style="left:0.0px;top:130.0px;width:2112.0px;height:2.0px;background:#111;"></div>
<div class="r" style="left:0.0px;top:278.0px;width:2112.0px;height:1.7px;background:#2a2a2a;"></div>
<div class="r" style="left:0.0px;top:370.0px;width:2112.0px;height:1.7px;background:#2a2a2a;"></div>
<div class="r" style="left:0.0px;top:462.0px;width:2112.0px;height:1.7px;background:#2a2a2a;"></div>
<div class="r" style="left:0.0px;top:0.0px;width:2.0px;height:534.0px;background:#111;"></div>
<div class="t" style="left:29.0px;top:14.9px;font-size:32px;color:#111;font-weight:400;font-family:'Liberation Sans',sans-serif;">Sep 2025</div>
<div class="t" style="left:1130.0px;top:13.9px;font-size:32px;color:#111;font-weight:400;font-family:'Liberation Sans',sans-serif;">Okt 2025</div>
<div class="t" style="left:67.0px;top:72.9px;font-size:32px;color:#111;font-weight:400;font-family:'Liberation Sans',sans-serif;">15</div>
<div class="t" style="left:318.7px;top:72.9px;font-size:32px;color:#111;font-weight:400;font-family:'Liberation Sans',sans-serif;">22</div>
<div class="t" style="left:570.3px;top:72.9px;font-size:32px;color:#111;font-weight:400;font-family:'Liberation Sans',sans-serif;">29</div>
<div class="t" style="left:822.0px;top:72.9px;font-size:32px;color:#111;font-weight:400;font-family:'Liberation Sans',sans-serif;">06</div>
<div class="t" style="left:1073.7px;top:72.9px;font-size:32px;color:#111;font-weight:400;font-family:'Liberation Sans',sans-serif;">13</div>
<div class="t" style="left:1325.3px;top:72.9px;font-size:32px;color:#111;font-weight:400;font-family:'Liberation Sans',sans-serif;">20</div>
<div class="t" style="left:1577.0px;top:72.9px;font-size:32px;color:#111;font-weight:400;font-family:'Liberation Sans',sans-serif;">27</div>
<div class="t" style="left:1828.6px;top:72.9px;font-size:32px;color:#111;font-weight:400;font-family:'Liberation Sans',sans-serif;">03</div>
<div class="t" style="left:2080.3px;top:72.9px;font-size:32px;color:#111;font-weight:400;font-family:'Liberation Sans',sans-serif;">10</div>
<div class="r" style="left:25.0px;top:119.0px;width:2.0px;height:12.0px;background:#111;"></div>
<div class="r" style="left:61.0px;top:108.0px;width:2.0px;height:23.0px;background:#111;"></div>
<div class="r" style="left:97.0px;top:119.0px;width:2.0px;height:12.0px;background:#111;"></div>
<div class="r" style="left:132.9px;top:119.0px;width:2.0px;height:12.0px;background:#111;"></div>
<div class="r" style="left:168.9px;top:119.0px;width:2.0px;height:12.0px;background:#111;"></div>
<div class="r" style="left:204.8px;top:119.0px;width:2.0px;height:12.0px;background:#111;"></div>
<div class="r" style="left:240.8px;top:119.0px;width:2.0px;height:12.0px;background:#111;"></div>
<div class="r" style="left:276.7px;top:119.0px;width:2.0px;height:12.0px;background:#111;"></div>
<div class="r" style="left:312.7px;top:108.0px;width:2.0px;height:23.0px;background:#111;"></div>
<div class="r" style="left:348.6px;top:119.0px;width:2.0px;height:12.0px;background:#111;"></div>
<div class="r" style="left:384.6px;top:119.0px;width:2.0px;height:12.0px;background:#111;"></div>
<div class="r" style="left:420.5px;top:119.0px;width:2.0px;height:12.0px;background:#111;"></div>
<div class="r" style="left:456.5px;top:119.0px;width:2.0px;height:12.0px;background:#111;"></div>
<div class="r" style="left:492.4px;top:119.0px;width:2.0px;height:12.0px;background:#111;"></div>
<div class="r" style="left:528.4px;top:119.0px;width:2.0px;height:12.0px;background:#111;"></div>
<div class="r" style="left:564.3px;top:108.0px;width:2.0px;height:23.0px;background:#111;"></div>
<div class="r" style="left:600.3px;top:119.0px;width:2.0px;height:12.0px;background:#111;"></div>
<div class="r" style="left:636.2px;top:119.0px;width:2.0px;height:12.0px;background:#111;"></div>
<div class="r" style="left:672.2px;top:119.0px;width:2.0px;height:12.0px;background:#111;"></div>
<div class="r" style="left:708.1px;top:119.0px;width:2.0px;height:12.0px;background:#111;"></div>
<div class="r" style="left:744.1px;top:119.0px;width:2.0px;height:12.0px;background:#111;"></div>
<div class="r" style="left:780.0px;top:119.0px;width:2.0px;height:12.0px;background:#111;"></div>
<div class="r" style="left:816.0px;top:108.0px;width:2.0px;height:23.0px;background:#111;"></div>
<div class="r" style="left:851.9px;top:119.0px;width:2.0px;height:12.0px;background:#111;"></div>
<div class="r" style="left:887.9px;top:119.0px;width:2.0px;height:12.0px;background:#111;"></div>
<div class="r" style="left:923.8px;top:119.0px;width:2.0px;height:12.0px;background:#111;"></div>
<div class="r" style="left:959.8px;top:119.0px;width:2.0px;height:12.0px;background:#111;"></div>
<div class="r" style="left:995.8px;top:119.0px;width:2.0px;height:12.0px;background:#111;"></div>
<div class="r" style="left:1031.7px;top:119.0px;width:2.0px;height:12.0px;background:#111;"></div>
<div class="r" style="left:1067.7px;top:108.0px;width:2.0px;height:23.0px;background:#111;"></div>
<div class="r" style="left:1103.6px;top:119.0px;width:2.0px;height:12.0px;background:#111;"></div>
<div class="r" style="left:1139.6px;top:119.0px;width:2.0px;height:12.0px;background:#111;"></div>
<div class="r" style="left:1175.5px;top:119.0px;width:2.0px;height:12.0px;background:#111;"></div>
<div class="r" style="left:1211.5px;top:119.0px;width:2.0px;height:12.0px;background:#111;"></div>
<div class="r" style="left:1247.4px;top:119.0px;width:2.0px;height:12.0px;background:#111;"></div>
<div class="r" style="left:1283.4px;top:119.0px;width:2.0px;height:12.0px;background:#111;"></div>
<div class="r" style="left:1319.3px;top:108.0px;width:2.0px;height:23.0px;background:#111;"></div>
<div class="r" style="left:1355.3px;top:119.0px;width:2.0px;height:12.0px;background:#111;"></div>
<div class="r" style="left:1391.2px;top:119.0px;width:2.0px;height:12.0px;background:#111;"></div>
<div class="r" style="left:1427.2px;top:119.0px;width:2.0px;height:12.0px;background:#111;"></div>
<div class="r" style="left:1463.1px;top:119.0px;width:2.0px;height:12.0px;background:#111;"></div>
<div class="r" style="left:1499.1px;top:119.0px;width:2.0px;height:12.0px;background:#111;"></div>
<div class="r" style="left:1535.0px;top:119.0px;width:2.0px;height:12.0px;background:#111;"></div>
<div class="r" style="left:1571.0px;top:108.0px;width:2.0px;height:23.0px;background:#111;"></div>
<div class="r" style="left:1606.9px;top:119.0px;width:2.0px;height:12.0px;background:#111;"></div>
<div class="r" style="left:1642.9px;top:119.0px;width:2.0px;height:12.0px;background:#111;"></div>
<div class="r" style="left:1678.8px;top:119.0px;width:2.0px;height:12.0px;background:#111;"></div>
<div class="r" style="left:1714.8px;top:119.0px;width:2.0px;height:12.0px;background:#111;"></div>
<div class="r" style="left:1750.7px;top:119.0px;width:2.0px;height:12.0px;background:#111;"></div>
<div class="r" style="left:1786.7px;top:119.0px;width:2.0px;height:12.0px;background:#111;"></div>
<div class="r" style="left:1822.6px;top:108.0px;width:2.0px;height:23.0px;background:#111;"></div>
<div class="r" style="left:1858.6px;top:119.0px;width:2.0px;height:12.0px;background:#111;"></div>
<div class="r" style="left:1894.6px;top:119.0px;width:2.0px;height:12.0px;background:#111;"></div>
<div class="r" style="left:1930.5px;top:119.0px;width:2.0px;height:12.0px;background:#111;"></div>
<div class="r" style="left:1966.5px;top:119.0px;width:2.0px;height:12.0px;background:#111;"></div>
<div class="r" style="left:2002.4px;top:119.0px;width:2.0px;height:12.0px;background:#111;"></div>
<div class="r" style="left:2038.4px;top:119.0px;width:2.0px;height:12.0px;background:#111;"></div>
<div class="r" style="left:2074.3px;top:108.0px;width:2.0px;height:23.0px;background:#111;"></div>
<div class="r" style="left:2110.3px;top:119.0px;width:2.0px;height:12.0px;background:#111;"></div>
<div class="r" style="left:2146.2px;top:119.0px;width:2.0px;height:12.0px;background:#111;"></div>
<div class="r" style="left:2182.2px;top:119.0px;width:2.0px;height:12.0px;background:#111;"></div>
<div class="r" style="left:168.5px;top:132.0px;width:2.5px;height:402.0px;background:#8aa832;"></div>
<div class="r" style="left:182.0px;top:150.0px;width:152.0px;height:110.0px;background:#4f8fc0;border:2px solid #1b3a58;box-sizing:border-box;"></div>
<div class="r" style="left:182.0px;top:150.0px;width:152.0px;height:13.0px;background:#e8203a;border:2px solid #1b3a58;border-bottom:none;box-sizing:border-box;"></div>
<div class="r" style="left:216.0px;top:150.0px;width:2.0px;height:110.0px;background:#1b3a58;"></div>
<div class="r" style="left:322.0px;top:150.0px;width:2.0px;height:110.0px;background:#1b3a58;"></div>
<div class="t" style="left:187.0px;top:153.6px;font-size:30px;color:#0e2540;font-weight:400;font-family:'Liberation Sans',sans-serif;">1</div>
<div class="t" style="left:221.0px;top:153.6px;font-size:30px;color:#0e2540;font-weight:400;font-family:'Liberation Sans',sans-serif;">18000</div>
<div class="t" style="left:185.0px;top:189.6px;font-size:30px;color:#0e2540;font-weight:400;font-family:'Liberation Sans',sans-serif;">S</div>
<div class="t" style="left:221.0px;top:189.6px;font-size:30px;color:#0e2540;font-weight:400;font-family:'Liberation Sans',sans-serif;">Funkti</div>
<div class="t" style="left:189.0px;top:242.8px;font-size:12px;color:#0e2540;font-weight:400;font-family:'Liberation Sans',sans-serif;">• • •</div>
<div class="t" style="left:223.0px;top:242.8px;font-size:12px;color:#0e2540;font-weight:400;font-family:'Liberation Sans',sans-serif;">• • • • • • • • • •</div>
<svg class="r" style="left:337px;top:193px;" width="16" height="24" viewBox="0 0 16 24"><path d="M14 2 L2 12 L14 22 Z" fill="none" stroke="#333" stroke-width="2"/></svg>
<div class="r" style="left:162.5px;top:205.0px;width:1.5px;height:184.0px;background:#222;"></div>
<div class="r" style="left:162.5px;top:204.5px;width:20.0px;height:1.5px;background:#222;"></div>
<div class="r" style="left:0.0px;top:317.0px;width:169.5px;height:18.0px;background:#ece20c;border-bottom:2px solid #6a6a20;box-sizing:border-box;"></div>
<svg class="r" style="left:124px;top:316px;" width="20" height="20" viewBox="0 0 20 20"><path d="M1 1 L19 1 L10 18 Z" fill="none" stroke="#5a5a20" stroke-width="1.8"/></svg>
<div class="r" style="left:163.0px;top:298.0px;width:25.0px;height:27.0px;background:transparent;border:1.5px solid #222;border-left:none;box-sizing:border-box;"></div>
<div class="r" style="left:163.0px;top:388.0px;width:61.0px;height:29.0px;background:transparent;border:1.5px solid #222;border-left:none;border-bottom:none;box-sizing:border-box;"></div>
<div class="r" style="left:205.0px;top:415.5px;width:19.0px;height:1.5px;background:#222;"></div>
<div class="r" style="left:169.0px;top:408.0px;width:36.0px;height:19.0px;background:#c6f08c;border:1.5px solid #333;box-sizing:border-box;"></div>
<svg class="r" style="left:122px;top:406px;" width="24" height="22" viewBox="0 0 24 22"><path d="M2 2 L22 2 L12 20 Z" fill="#f2ea30" stroke="#444" stroke-width="1.8"/></svg>
<svg class="r" style="left:758px;top:102px;" width="44" height="66" viewBox="0 0 44 66"><path d="M3 3 L3 52 L14 41 L23 61 L31 57 L22 38 L38 38 Z" fill="#fff" stroke="#111" stroke-width="3" stroke-linejoin="round"/></svg>
</div>
<div class="r" style="left:2917.0px;top:1249.0px;width:1.5px;height:534.0px;background:#333;"></div>
<div class="r" style="left:389.5px;top:1781.5px;width:2562.5px;height:1.5px;background:#8e9096;"></div>
<div class="r" style="left:2918.5px;top:1249.0px;width:27.5px;height:532.0px;background:#f7f7fa;"></div>
<svg class="r" style="left:2926px;top:1386px;" width="16" height="12" viewBox="0 0 16 12"><path d="M2 10 L8 3 L14 10 Z" fill="#aab"/></svg>
<div class="r" style="left:2952.0px;top:1024.0px;width:5.0px;height:759.0px;background:#1f2e3b;"></div>
<div class="r" style="left:0.0px;top:1781.0px;width:3016.0px;height:2.0px;background:#4d535b;"></div>
</div>
<div class="r" style="left:0px;top:2010px;width:3840px;height:150px;overflow:hidden;opacity:0.39;">
<div class="r" style="left:0px;top:0px;width:3840px;height:2160px;transform-origin:0 0;transform:translateY(1975px) scaleY(-1);">
<div id="app" class="r" style="left:729px;top:192px;width:3016px;height:1783px;border-radius:0 0 22px 22px;overflow:hidden;background:#e0e0e4;">
<div class="r" style="left:0.0px;top:0.0px;width:3016.0px;height:108.0px;background:#dfdfe3;"></div>
<svg class="r" style="left:41px;top:16px;" width="60" height="42" viewBox="0 0 60 42"><path d="M14 35 A17 17 0 0 1 30 6" fill="none" stroke="#8a8a90" stroke-width="3"/></svg>
<div class="t" style="left:53.0px;top:28.7px;font-size:24px;color:#2a5f95;font-weight:700;font-family:'Liberation Sans',sans-serif;font-style:italic;">pro</div>
<div class="r" style="left:144.0px;top:24.0px;width:377.0px;height:31.0px;background:#e4e4e8;border:1.5px solid #b9b9be;box-sizing:border-box;"></div>
<div class="t" style="left:150.0px;top:30.4px;font-size:19.6px;color:#333;font-weight:400;font-family:'Liberation Sans',sans-serif;">110 - proELECTRO AG</div>
<svg class="r" style="left:499px;top:36px;" width="14" height="10" viewBox="0 0 14 10"><path d="M2 2 L12 2 L7 8 Z" fill="#333"/></svg>
<svg class="r" style="left:574px;top:20px;" width="42" height="42" viewBox="0 0 42 42"><g transform="translate(21,21)" fill="#1a5893"><circle r="13"/><rect x="-4" y="-20" width="8" height="11" rx="2" transform="rotate(0)"/><rect x="-4" y="-20" width="8" height="11" rx="2" transform="rotate(45)"/><rect x="-4" y="-20" width="8" height="11" rx="2" transform="rotate(90)"/><rect x="-4" y="-20" width="8" height="11" rx="2" transform="rotate(135)"/><rect x="-4" y="-20" width="8" height="11" rx="2" transform="rotate(180)"/><rect x="-4" y="-20" width="8" height="11" rx="2" transform="rotate(225)"/><rect x="-4" y="-20" width="8" height="11" rx="2" transform="rotate(270)"/><rect x="-4" y="-20" width="8" height="11" rx="2" transform="rotate(315)"/></g><circle cx="21" cy="21" r="5.5" fill="#dfdfe3"/></svg>
<svg class="r" style="left:648px;top:20px;" width="40" height="40" viewBox="0 0 40 40"><rect x="1" y="1" width="38" height="38" fill="#1a5893"/><rect x="6" y="6" width="14" height="28" fill="#dfdfe3"/><rect x="9" y="9" width="8" height="22" fill="#1a5893"/></svg>
<svg class="r" style="left:721px;top:20px;" width="40" height="40" viewBox="0 0 40 40"><rect x="1" y="1" width="38" height="38" fill="#1a5893"/><rect x="6" y="9" width="8" height="25" fill="#dfdfe3"/><rect x="17" y="9" width="17" height="11" fill="#dfdfe3"/><rect x="17" y="23" width="17" height="11" fill="#dfdfe3"/><rect x="8" y="11" width="4" height="21" fill="#1a5893"/><rect x="19" y="12" width="13" height="6" fill="#1a5893"/><rect x="19" y="25" width="13" height="6" fill="#1a5893"/></svg>
<svg class="r" style="left:796px;top:20px;" width="36" height="40" viewBox="0 0 36 40"><rect x="3" y="3" width="30" height="35" fill="#1a5893"/><circle cx="18" cy="11" r="3.5" fill="#dfdfe3"/><path d="M13 16 L20 16 L20 30 L23 30 L23 33 L13 33 L13 30 L16 30 L16 19 L13 19 Z" fill="#dfdfe3"/></svg>
<svg class="r" style="left:866px;top:20px;" width="40" height="40" viewBox="0 0 40 40"><circle cx="20" cy="20" r="19" fill="#1a5893"/><path d="M13 15 Q13 8 20 8 Q27 8 27 14 Q27 18 22 21 L22 25 L18 25 L18 19 Q23 16 23 14 Q23 12 20 12 Q17 12 17 15 Z" fill="#fff"/><rect x="18" y="28" width="4" height="4" fill="#fff"/></svg>
<svg class="r" style="left:937px;top:18px;" width="42" height="44" viewBox="0 0 42 44"><path d="M3 3 L22 8 L22 40 L3 35 Z" fill="#1a5893"/><path d="M8 3 L25 3 L25 28" fill="none" stroke="#1a5893" stroke-width="4"/><path d="M24 22 L24 33 L32 33 L32 38 L40 31 L32 24 L32 29 L28 29 L28 22 Z" fill="#1a5893"/></svg>
<div class="t" style="left:1023.0px;top:30.5px;font-size:19.5px;color:#333;font-weight:700;font-family:'Liberation Sans',sans-serif;">Emil Zander</div>
<div class="r" style="left:2206.0px;top:20.0px;width:593.0px;height:40.0px;background:#ffffff;border:1.5px solid #a8a8ad;box-sizing:border-box;"></div>
<svg class="r" style="left:2210px;top:26px;" width="28" height="30" viewBox="0 0 28 30"><circle cx="11" cy="11" r="8" fill="none" stroke="#222" stroke-width="2.5"/><path d="M17 17 L24 25" stroke="#222" stroke-width="3"/></svg>
<div class="t" style="left:2239.0px;top:31.6px;font-size:17px;color:#222;font-weight:400;font-family:'Liberation Sans',sans-serif;">Suche</div>
<div class="r" style="left:2815.0px;top:21.0px;width:28.0px;height:32.0px;background:#1b5a8f;border-radius:3px;"></div>
<svg class="r" style="left:2815px;top:21px;" width="28" height="32" viewBox="0 0 28 32"><ellipse cx="13.5" cy="15.5" rx="6.5" ry="6" fill="none" stroke="#e3f1fd" stroke-width="2.2"/><path d="M19.5 13 L19.5 20 Q20 23 23 23.5" fill="none" stroke="#e3f1fd" stroke-width="2.2"/></svg>
<div class="t" style="left:2853.0px;top:16.6px;font-size:43px;color:#111;font-weight:700;font-family:'Liberation Sans',sans-serif;transform-origin:0 0;transform:scaleX(0.86);">Proalpha</div>
<div class="r" style="left:0.0px;top:106.0px;width:3016.0px;height:2.0px;background:#c8c8cc;"></div>
<svg class="r" style="left:10px;top:78px;" width="28" height="28" viewBox="0 0 28 28"><path d="M14 1 L17.5 10 L27 10.5 L19.5 16.5 L22 26 L14 20.5 L6 26 L8.5 16.5 L1 10.5 L10.5 10 Z" fill="#3a5068"/></svg>
<div class="t" style="left:47.0px;top:82.8px;font-size:18px;color:#333;font-weight:400;font-family:'Liberation Sans',sans-serif;">Favoriten</div>
<div class="r" style="left:144.0px;top:73.0px;width:171.0px;height:35.0px;background:#eeeef3;border:1.5px solid #c6c6cb;border-bottom:none;box-sizing:border-box;"></div>
<svg class="r" style="left:158px;top:78px;" width="28" height="28" viewBox="0 0 28 28"><rect x="2" y="3" width="3" height="22" fill="#3a5068"/><rect x="7" y="3" width="3" height="22" fill="#3a5068"/><circle cx="17" cy="15" r="9" fill="#3a5068"/><circle cx="17" cy="15" r="4" fill="#eeeef3"/></svg>
<div class="t" style="left:192.5px;top:82.4px;font-size:18.4px;color:#222;font-weight:700;font-family:'Liberation Sans',sans-serif;">Programme</div>
<svg class="r" style="left:350px;top:80px;" width="26" height="20" viewBox="0 0 26 20"><path d="M12 2 L12 18 L2 10 Z M24 2 L24 18 L14 10 Z" fill="#1a5f9e"/></svg>
<div class="t" style="left:407.0px;top:82.3px;font-size:18.5px;color:#444;font-weight:400;font-family:'Liberation Sans',sans-serif;">Teile</div>
<div class="t" style="left:460.0px;top:82.6px;font-size:17px;color:#222;font-weight:700;font-family:'Liberation Sans',sans-serif;">✕</div>
<div class="t" style="left:526.0px;top:82.3px;font-size:18.5px;color:#444;font-weight:400;font-family:'Liberation Sans',sans-serif;">Standardstücklisten</div>
<div class="t" style="left:710.0px;top:82.6px;font-size:17px;color:#222;font-weight:700;font-family:'Liberation Sans',sans-serif;">✕</div>
<div class="r" style="left:747.0px;top:73.0px;width:250.0px;height:35.0px;background:#f3f3f8;border:1.5px solid #c6c6cb;border-bottom:none;box-sizing:border-box;"></div>
<div class="t" style="left:771.0px;top:82.3px;font-size:18.5px;color:#222;font-weight:700;font-family:'Liberation Sans',sans-serif;">Produktionsauftrag</div>
<div class="t" style="left:959.0px;top:82.6px;font-size:17px;color:#222;font-weight:700;font-family:'Liberation Sans',sans-serif;">✕</div>
<div class="r" style="left:0.0px;top:108.0px;width:375.0px;height:52.0px;background:#f2f2f6;"></div>
<svg class="r" style="left:11px;top:121px;" width="22" height="24" viewBox="0 0 22 24"><path d="M2 1 L20 12 L2 23 Z" fill="#1a5b93"/></svg>
<div class="r" style="left:45.0px;top:114.0px;width:284.0px;height:36.0px;background:#ffffff;border:1.5px solid #c4c4c8;box-sizing:border-box;"></div>
<div class="t" style="left:54.0px;top:123.3px;font-size:18.5px;color:#333;font-weight:400;font-family:'Liberation Sans',sans-serif;">Produktionsauftrag</div>
<svg class="r" style="left:339px;top:120px;" width="26" height="26" viewBox="0 0 26 26"><path d="M3 3 L23 23 M23 3 L3 23" stroke="#1a5b93" stroke-width="5.5"/></svg>
<div class="r" style="left:0.0px;top:160.0px;width:375.0px;height:1107.0px;background:#2a4458;"></div>
<div class="r" style="left:0.0px;top:160.0px;width:344.0px;height:55.0px;background:#1b74d0;"></div>
<div class="r" style="left:344.0px;top:160.0px;width:27.0px;height:1107.0px;background:#2d4358;"></div>
<div class="r" style="left:344.0px;top:160.0px;width:27.0px;height:28.0px;background:#3b5165;"></div>
<div class="r" style="left:345.0px;top:188.0px;width:25.0px;height:514.0px;background:#4f6478;"></div>
<div class="r" style="left:355.0px;top:444.0px;width:8.0px;height:2.0px;background:#8a9aa9;"></div>
<div class="r" style="left:355.0px;top:448.0px;width:8.0px;height:2.0px;background:#8a9aa9;"></div>
<div class="r" style="left:355.0px;top:452.0px;width:8.0px;height:2.0px;background:#8a9aa9;"></div>
<div class="r" style="left:371.0px;top:108.0px;width:13.0px;height:1675.0px;background:#dcdde3;"></div>
<div class="r" style="left:385.0px;top:108.0px;width:5.0px;height:1675.0px;background:#1f2e3b;"></div>
<div class="r" style="left:0px;top:160px;width:344px;height:1107px;overflow:hidden;">
<svg class="r" style="left:1px;top:13px;" width="28" height="28" viewBox="0 0 28 28"><rect x="1" y="1.5" width="26" height="25.5" fill="none" stroke="#c9d3dd" stroke-width="2"/><rect x="0" y="0.5" width="28" height="8" fill="#eef3f8"/><rect x="3" y="3" width="8" height="1.5" fill="#556677"/></svg>
<div class="t" style="left:33.0px;top:5.4px;font-size:18.4px;color:#ffffff;font-weight:700;font-family:'Liberation Sans',sans-serif;"><span class="u">Produktionsauftrag</span></div>
<div class="t" style="left:33.0px;top:30.0px;font-size:19.5px;color:#dce3ea;font-weight:400;font-family:'Liberation Sans',sans-serif;">Produktion / <span class="u">Produktionsauftrag</span></div>
<svg class="r" style="left:1px;top:79px;" width="28" height="28" viewBox="0 0 28 28"><rect x="1" y="1.5" width="26" height="25.5" fill="none" stroke="#c9d3dd" stroke-width="2"/><rect x="0" y="0.5" width="28" height="8" fill="#eef3f8"/><rect x="3" y="3" width="8" height="1.5" fill="#556677"/></svg>
<div class="t" style="left:33.0px;top:58.6px;font-size:18.4px;color:#ffffff;font-weight:700;font-family:'Liberation Sans',sans-serif;"><span class="u">Produktionsauftrag</span></div>
<div class="t" style="left:33.0px;top:83.2px;font-size:19.5px;color:#dce3ea;font-weight:400;font-family:'Liberation Sans',sans-serif;">Qualitätsmanagement /</div>
<div class="t" style="left:33.0px;top:108.7px;font-size:19.5px;color:#dce3ea;font-weight:400;font-family:'Liberation Sans',sans-serif;">Produktion</div>
<svg class="r" style="left:1px;top:158px;" width="28" height="28" viewBox="0 0 28 28"><rect x="1" y="1.5" width="26" height="25.5" fill="none" stroke="#c9d3dd" stroke-width="2"/><rect x="0" y="0.5" width="28" height="8" fill="#eef3f8"/><rect x="3" y="3" width="8" height="1.5" fill="#556677"/></svg>
<div class="t" style="left:33.0px;top:137.3px;font-size:18.4px;color:#ffffff;font-weight:700;font-family:'Liberation Sans',sans-serif;"><span class="u">Produktionsauftrag</span></div>
<div class="t" style="left:33.0px;top:161.9px;font-size:19.5px;color:#dce3ea;font-weight:400;font-family:'Liberation Sans',sans-serif;">Instandhaltung /</div>
<div class="t" style="left:33.0px;top:187.4px;font-size:19.5px;color:#dce3ea;font-weight:400;font-family:'Liberation Sans',sans-serif;">Instandhaltungsauftrag</div>
<svg class="r" style="left:1px;top:249px;" width="28" height="28" viewBox="0 0 28 28"><rect x="1" y="1.5" width="26" height="25.5" fill="none" stroke="#c9d3dd" stroke-width="2"/><rect x="0" y="0.5" width="28" height="8" fill="#eef3f8"/><rect x="3" y="3" width="8" height="1.5" fill="#556677"/></svg>
<div class="t" style="left:33.0px;top:216.0px;font-size:18.4px;color:#ffffff;font-weight:700;font-family:'Liberation Sans',sans-serif;">Dispovorschläge nach</div>
<div class="t" style="left:33.0px;top:241.5px;font-size:18.4px;color:#ffffff;font-weight:700;font-family:'Liberation Sans',sans-serif;"><span class="u">Produktionsauftrag</span></div>
<div class="t" style="left:33.0px;top:266.1px;font-size:19.5px;color:#dce3ea;font-weight:400;font-family:'Liberation Sans',sans-serif;">Materialwirtschaft / Disposition /</div>
<div class="t" style="left:33.0px;top:291.6px;font-size:19.5px;color:#dce3ea;font-weight:400;font-family:'Liberation Sans',sans-serif;">Dispovorschläge überarbeiten</div>
<svg class="r" style="left:1px;top:353px;" width="28" height="28" viewBox="0 0 28 28"><rect x="1" y="1.5" width="26" height="25.5" fill="none" stroke="#c9d3dd" stroke-width="2"/><rect x="0" y="0.5" width="28" height="8" fill="#eef3f8"/><rect x="3" y="3" width="8" height="1.5" fill="#556677"/></svg>
<div class="t" style="left:33.0px;top:320.2px;font-size:18.4px;color:#ffffff;font-weight:700;font-family:'Liberation Sans',sans-serif;">Dispovorschläge nach</div>
<div class="t" style="left:33.0px;top:345.7px;font-size:18.4px;color:#ffffff;font-weight:700;font-family:'Liberation Sans',sans-serif;"><span class="u">Produktionsauftrag</span></div>
<div class="t" style="left:33.0px;top:370.3px;font-size:19.5px;color:#dce3ea;font-weight:400;font-family:'Liberation Sans',sans-serif;">Produktion / <span class="u">Produktionsauftrag</span></div>
<div class="t" style="left:33.0px;top:395.8px;font-size:19.5px;color:#dce3ea;font-weight:400;font-family:'Liberation Sans',sans-serif;">/ Bearbeitung Disposition</div>
<svg class="r" style="left:1px;top:432px;" width="28" height="28" viewBox="0 0 28 28"><rect x="1" y="1.5" width="26" height="25.5" fill="none" stroke="#c9d3dd" stroke-width="2"/><rect x="0" y="0.5" width="28" height="8" fill="#eef3f8"/><rect x="3" y="3" width="8" height="1.5" fill="#556677"/><rect x="11" y="10" width="4" height="3" fill="#e6ecf1"/><rect x="11" y="14" width="4" height="7" fill="#e6ecf1"/><rect x="9" y="19" width="8" height="2" fill="#e6ecf1"/></svg>
<div class="t" style="left:33.0px;top:424.4px;font-size:18.4px;color:#ffffff;font-weight:700;font-family:'Liberation Sans',sans-serif;"><span class="u">Produktionsauftrag</span> (Info)</div>
<div class="t" style="left:33.0px;top:449.0px;font-size:19.5px;color:#dce3ea;font-weight:400;font-family:'Liberation Sans',sans-serif;">Produktion / MIS</div>
<svg class="r" style="left:1px;top:485px;" width="28" height="28" viewBox="0 0 28 28"><rect x="1" y="1.5" width="26" height="25.5" fill="none" stroke="#c9d3dd" stroke-width="2"/><rect x="0" y="0.5" width="28" height="8" fill="#eef3f8"/><rect x="3" y="3" width="8" height="1.5" fill="#556677"/><rect x="11" y="10" width="4" height="3" fill="#e6ecf1"/><rect x="11" y="14" width="4" height="7" fill="#e6ecf1"/><rect x="9" y="19" width="8" height="2" fill="#e6ecf1"/></svg>
<div class="t" style="left:33.0px;top:477.6px;font-size:18.4px;color:#ffffff;font-weight:700;font-family:'Liberation Sans',sans-serif;"><span class="u">Produktionsauftrag</span> (Info)</div>
<div class="t" style="left:33.0px;top:502.2px;font-size:19.5px;color:#dce3ea;font-weight:400;font-family:'Liberation Sans',sans-serif;">MIS / Produktion</div>
<svg class="r" style="left:1px;top:551px;" width="28" height="28" viewBox="0 0 28 28"><rect x="7" y="0" width="13" height="9" fill="#eef2f5"/><rect x="1" y="8" width="25" height="12" fill="#eef2f5"/><rect x="5" y="16" width="17" height="10" fill="#eef2f5"/><rect x="6" y="19" width="15" height="1.5" fill="#2a4257"/><rect x="6" y="22" width="15" height="1.5" fill="#2a4257"/><rect x="3" y="11" width="21" height="1.5" fill="#2a4257"/></svg>
<div class="t" style="left:33.0px;top:530.8px;font-size:18.4px;color:#ffffff;font-weight:700;font-family:'Liberation Sans',sans-serif;">Aktivitäten im Zeitbereich</div>
<div class="t" style="left:33.0px;top:555.4px;font-size:19.5px;color:#dce3ea;font-weight:400;font-family:'Liberation Sans',sans-serif;">Produktion / <span class="u">Produktionsauftrag</span></div>
<div class="t" style="left:33.0px;top:580.9px;font-size:19.5px;color:#dce3ea;font-weight:400;font-family:'Liberation Sans',sans-serif;">/ Ausgaben</div>
<svg class="r" style="left:1px;top:630px;" width="28" height="28" viewBox="0 0 28 28"><rect x="7" y="0" width="13" height="9" fill="#eef2f5"/><rect x="1" y="8" width="25" height="12" fill="#eef2f5"/><rect x="5" y="16" width="17" height="10" fill="#eef2f5"/><rect x="6" y="19" width="15" height="1.5" fill="#2a4257"/><rect x="6" y="22" width="15" height="1.5" fill="#2a4257"/><rect x="3" y="11" width="21" height="1.5" fill="#2a4257"/></svg>
<div class="t" style="left:33.0px;top:609.5px;font-size:18.4px;color:#ffffff;font-weight:700;font-family:'Liberation Sans',sans-serif;">Arbeitspapiere</div>
<div class="t" style="left:33.0px;top:634.1px;font-size:19.5px;color:#dce3ea;font-weight:400;font-family:'Liberation Sans',sans-serif;">Produktion / <span class="u">Produktionsauftrag</span></div>
<div class="t" style="left:33.0px;top:659.6px;font-size:19.5px;color:#dce3ea;font-weight:400;font-family:'Liberation Sans',sans-serif;">/ Ausgaben</div>
<svg class="r" style="left:1px;top:709px;" width="28" height="28" viewBox="0 0 28 28"><rect x="7" y="0" width="13" height="9" fill="#eef2f5"/><rect x="1" y="8" width="25" height="12" fill="#eef2f5"/><rect x="5" y="16" width="17" height="10" fill="#eef2f5"/><rect x="6" y="19" width="15" height="1.5" fill="#2a4257"/><rect x="6" y="22" width="15" height="1.5" fill="#2a4257"/><rect x="3" y="11" width="21" height="1.5" fill="#2a4257"/></svg>
<div class="t" style="left:33.0px;top:688.2px;font-size:18.4px;color:#ffffff;font-weight:700;font-family:'Liberation Sans',sans-serif;">Auftragsstückliste</div>
<div class="t" style="left:33.0px;top:712.8px;font-size:19.5px;color:#dce3ea;font-weight:400;font-family:'Liberation Sans',sans-serif;">Produktion / <span class="u">Produktionsauftrag</span></div>
<div class="t" style="left:33.0px;top:738.3px;font-size:19.5px;color:#dce3ea;font-weight:400;font-family:'Liberation Sans',sans-serif;">/ Ausgaben</div>
<svg class="r" style="left:1px;top:800px;" width="28" height="28" viewBox="0 0 28 28"><rect x="7" y="0" width="13" height="9" fill="#eef2f5"/><rect x="1" y="8" width="25" height="12" fill="#eef2f5"/><rect x="5" y="16" width="17" height="10" fill="#eef2f5"/><rect x="6" y="19" width="15" height="1.5" fill="#2a4257"/><rect x="6" y="22" width="15" height="1.5" fill="#2a4257"/><rect x="3" y="11" width="21" height="1.5" fill="#2a4257"/></svg>
<div class="t" style="left:33.0px;top:766.9px;font-size:18.4px;color:#ffffff;font-weight:700;font-family:'Liberation Sans',sans-serif;">Auftragsstückliste nach</div>
<div class="t" style="left:33.0px;top:792.4px;font-size:18.4px;color:#ffffff;font-weight:700;font-family:'Liberation Sans',sans-serif;">Verwendungsart</div>
<div class="t" style="left:33.0px;top:817.0px;font-size:19.5px;color:#dce3ea;font-weight:400;font-family:'Liberation Sans',sans-serif;">Produktion / <span class="u">Produktionsauftrag</span></div>
<div class="t" style="left:33.0px;top:842.5px;font-size:19.5px;color:#dce3ea;font-weight:400;font-family:'Liberation Sans',sans-serif;">/ Ausgaben</div>
<svg class="r" style="left:1px;top:904px;" width="28" height="28" viewBox="0 0 28 28"><rect x="7" y="0" width="13" height="9" fill="#eef2f5"/><rect x="1" y="8" width="25" height="12" fill="#eef2f5"/><rect x="5" y="16" width="17" height="10" fill="#eef2f5"/><rect x="6" y="19" width="15" height="1.5" fill="#2a4257"/><rect x="6" y="22" width="15" height="1.5" fill="#2a4257"/><rect x="3" y="11" width="21" height="1.5" fill="#2a4257"/></svg>
<div class="t" style="left:33.0px;top:871.1px;font-size:18.4px;color:#ffffff;font-weight:700;font-family:'Liberation Sans',sans-serif;">Bedarfsverwendung</div>
<div class="t" style="left:33.0px;top:896.6px;font-size:18.4px;color:#ffffff;font-weight:700;font-family:'Liberation Sans',sans-serif;">Produktion</div>
<div class="t" style="left:33.0px;top:921.2px;font-size:19.5px;color:#dce3ea;font-weight:400;font-family:'Liberation Sans',sans-serif;">Produktion / <span class="u">Produktionsauftrag</span></div>
<div class="t" style="left:33.0px;top:946.7px;font-size:19.5px;color:#dce3ea;font-weight:400;font-family:'Liberation Sans',sans-serif;">/ Ausgaben</div>
<svg class="r" style="left:1px;top:996px;" width="28" height="28" viewBox="0 0 28 28"><rect x="7" y="0" width="13" height="9" fill="#eef2f5"/><rect x="1" y="8" width="25" height="12" fill="#eef2f5"/><rect x="5" y="16" width="17" height="10" fill="#eef2f5"/><rect x="6" y="19" width="15" height="1.5" fill="#2a4257"/><rect x="6" y="22" width="15" height="1.5" fill="#2a4257"/><rect x="3" y="11" width="21" height="1.5" fill="#2a4257"/></svg>
<div class="t" style="left:33.0px;top:975.3px;font-size:18.4px;color:#ffffff;font-weight:700;font-family:'Liberation Sans',sans-serif;">Elektrostückliste Auftrag</div>
<div class="t" style="left:33.0px;top:999.9px;font-size:19.5px;color:#dce3ea;font-weight:400;font-family:'Liberation Sans',sans-serif;">Produktion / <span class="u">Produktionsauftrag</span></div>
<div class="t" style="left:33.0px;top:1025.4px;font-size:19.5px;color:#dce3ea;font-weight:400;font-family:'Liberation Sans',sans-serif;">/ Ausgaben</div>
<svg class="r" style="left:1px;top:1074px;" width="28" height="28" viewBox="0 0 28 28"><rect x="7" y="0" width="13" height="9" fill="#eef2f5"/><rect x="1" y="8" width="25" height="12" fill="#eef2f5"/><rect x="5" y="16" width="17" height="10" fill="#eef2f5"/><rect x="6" y="19" width="15" height="1.5" fill="#2a4257"/><rect x="6" y="22" width="15" height="1.5" fill="#2a4257"/><rect x="3" y="11" width="21" height="1.5" fill="#2a4257"/></svg>
<div class="t" style="left:33.0px;top:1054.0px;font-size:18.4px;color:#ffffff;font-weight:700;font-family:'Liberation Sans',sans-serif;">Halbfabrikatebericht</div>
<div class="t" style="left:33.0px;top:1078.6px;font-size:19.5px;color:#dce3ea;font-weight:400;font-family:'Liberation Sans',sans-serif;">Produktion / <span class="u">Produktionsauftrag</span></div>
<div class="t" style="left:33.0px;top:1104.1px;font-size:19.5px;color:#dce3ea;font-weight:400;font-family:'Liberation Sans',sans-serif;">/ Ausgaben</div>
</div>
<svg class="r" style="left:349px;top:1248px;" width="16" height="10" viewBox="0 0 16 10"><path d="M2 2 L8 8 L14 2" fill="none" stroke="#6b7f92" stroke-width="2"/></svg>
<div class="r" style="left:0.0px;top:1267.0px;width:375.0px;height:127.0px;background:#f3f3f7;"></div>
<div class="r" style="left:168.0px;top:1274.0px;width:1.5px;height:1.5px;background:#8a8a90;"></div>
<div class="r" style="left:168.0px;top:1278.0px;width:1.5px;height:1.5px;background:#8a8a90;"></div>
<div class="r" style="left:171.0px;top:1274.0px;width:1.5px;height:1.5px;background:#8a8a90;"></div>
<div class="r" style="left:171.0px;top:1278.0px;width:1.5px;height:1.5px;background:#8a8a90;"></div>
<div class="r" style="left:174.0px;top:1274.0px;width:1.5px;height:1.5px;background:#8a8a90;"></div>
<div class="r" style="left:174.0px;top:1278.0px;width:1.5px;height:1.5px;background:#8a8a90;"></div>
<div class="r" style="left:177.0px;top:1274.0px;width:1.5px;height:1.5px;background:#8a8a90;"></div>
<div class="r" style="left:177.0px;top:1278.0px;width:1.5px;height:1.5px;background:#8a8a90;"></div>
<div class="r" style="left:180.0px;top:1274.0px;width:1.5px;height:1.5px;background:#8a8a90;"></div>
<div class="r" style="left:180.0px;top:1278.0px;width:1.5px;height:1.5px;background:#8a8a90;"></div>
<div class="r" style="left:183.0px;top:1274.0px;width:1.5px;height:1.5px;background:#8a8a90;"></div>
<div class="r" style="left:183.0px;top:1278.0px;width:1.5px;height:1.5px;background:#8a8a90;"></div>
<div class="r" style="left:186.0px;top:1274.0px;width:1.5px;height:1.5px;background:#8a8a90;"></div>
<div class="r" style="left:186.0px;top:1278.0px;width:1.5px;height:1.5px;background:#8a8a90;"></div>
<div class="r" style="left:189.0px;top:1274.0px;width:1.5px;height:1.5px;background:#8a8a90;"></div>
<div class="r" style="left:189.0px;top:1278.0px;width:1.5px;height:1.5px;background:#8a8a90;"></div>
<div class="r" style="left:192.0px;top:1274.0px;width:1.5px;height:1.5px;background:#8a8a90;"></div>
<div class="r" style="left:192.0px;top:1278.0px;width:1.5px;height:1.5px;background:#8a8a90;"></div>
<div class="r" style="left:195.0px;top:1274.0px;width:1.5px;height:1.5px;background:#8a8a90;"></div>
<div class="r" style="left:195.0px;top:1278.0px;width:1.5px;height:1.5px;background:#8a8a90;"></div>
<div class="r" style="left:198.0px;top:1274.0px;width:1.5px;height:1.5px;background:#8a8a90;"></div>
<div class="r" style="left:198.0px;top:1278.0px;width:1.5px;height:1.5px;background:#8a8a90;"></div>
<div class="r" style="left:201.0px;top:1274.0px;width:1.5px;height:1.5px;background:#8a8a90;"></div>
<div class="r" style="left:201.0px;top:1278.0px;width:1.5px;height:1.5px;background:#8a8a90;"></div>
<div class="t" style="left:13.0px;top:1295.6px;font-size:21.7px;color:#333;font-weight:400;font-family:'Liberation Sans',sans-serif;">Aufgaben für Emil Zander</div>
<svg class="r" style="left:335px;top:1298px;" width="30" height="28" viewBox="0 0 30 28"><circle cx="15" cy="9" r="7.5" fill="#1a5b93"/><path d="M2 27 Q3 16 11 15 L19 15 Q27 16 28 27 Z" fill="#1a5b93"/></svg>
<svg class="r" style="left:8px;top:1345px;" width="28" height="27" viewBox="0 0 28 27"><rect x="1" y="3" width="26" height="23" fill="#1a5b93"/><rect x="1" y="3" width="26" height="5" fill="#1a5b93"/><rect x="6" y="0" width="3" height="6" fill="#1a5b93"/><rect x="19" y="0" width="3" height="6" fill="#1a5b93"/><rect x="3" y="10" width="3" height="2.5" fill="#f3f3f7"/><rect x="8" y="10" width="3" height="2.5" fill="#f3f3f7"/><rect x="13" y="10" width="3" height="2.5" fill="#f3f3f7"/><rect x="18" y="10" width="3" height="2.5" fill="#f3f3f7"/><rect x="23" y="10" width="3" height="2.5" fill="#f3f3f7"/><rect x="3" y="14" width="3" height="2.5" fill="#f3f3f7"/><rect x="8" y="14" width="3" height="2.5" fill="#f3f3f7"/><rect x="13" y="14" width="3" height="2.5" fill="#f3f3f7"/><rect x="18" y="14" width="3" height="2.5" fill="#f3f3f7"/><rect x="23" y="14" width="3" height="2.5" fill="#f3f3f7"/><rect x="3" y="18" width="3" height="2.5" fill="#f3f3f7"/><rect x="8" y="18" width="3" height="2.5" fill="#f3f3f7"/><rect x="13" y="18" width="3" height="2.5" fill="#f3f3f7"/><rect x="18" y="18" width="3" height="2.5" fill="#f3f3f7"/><rect x="23" y="18" width="3" height="2.5" fill="#f3f3f7"/><rect x="3" y="22" width="3" height="2.5" fill="#f3f3f7"/><rect x="8" y="22" width="3" height="2.5" fill="#f3f3f7"/><rect x="13" y="22" width="3" height="2.5" fill="#f3f3f7"/><rect x="18" y="22" width="3" height="2.5" fill="#f3f3f7"/><rect x="23" y="22" width="3" height="2.5" fill="#f3f3f7"/></svg>
<div class="t" style="left:48.0px;top:1350.2px;font-size:19.8px;color:#333;font-weight:700;font-family:'Liberation Sans',sans-serif;">06.08.2025</div>
<svg class="r" style="left:298px;top:1345px;" width="30" height="28" viewBox="0 0 30 28"><path d="M4 12 Q6 4 15 4 Q21 4 24 8 L27 5 L27 14 L18 14 L21 11 Q19 8 15 8 Q9 8 8 13 Z" fill="#1a5b93"/><path d="M26 16 Q24 24 15 24 Q9 24 6 20 L3 23 L3 14 L12 14 L9 17 Q11 20 15 20 Q21 20 22 15 Z" fill="#1a5b93"/></svg>
<svg class="r" style="left:335px;top:1345px;" width="28" height="28" viewBox="0 0 28 28"><g transform="translate(14,14)" fill="#1a5b93"><circle r="9"/><rect x="-3" y="-13.5" width="6" height="7" rx="1.5" transform="rotate(0)"/><rect x="-3" y="-13.5" width="6" height="7" rx="1.5" transform="rotate(45)"/><rect x="-3" y="-13.5" width="6" height="7" rx="1.5" transform="rotate(90)"/><rect x="-3" y="-13.5" width="6" height="7" rx="1.5" transform="rotate(135)"/><rect x="-3" y="-13.5" width="6" height="7" rx="1.5" transform="rotate(180)"/><rect x="-3" y="-13.5" width="6" height="7" rx="1.5" transform="rotate(225)"/><rect x="-3" y="-13.5" width="6" height="7" rx="1.5" transform="rotate(270)"/><rect x="-3" y="-13.5" width="6" height="7" rx="1.5" transform="rotate(315)"/></g><circle cx="14" cy="14" r="4" fill="#f3f3f7"/></svg>
<div class="r" style="left:0.0px;top:1394.0px;width:375.0px;height:389.0px;background:#2a4458;"></div>
<div class="t" style="left:7.0px;top:1401.3px;font-size:18.5px;color:#e8eef3;font-weight:400;font-family:'Liberation Sans',sans-serif;">Kontenstamm</div>
<div class="t" style="left:7.0px;top:1434.3px;font-size:18.5px;color:#e8eef3;font-weight:400;font-family:'Liberation Sans',sans-serif;">Kostenstelle (2)</div>
<div class="r" style="left:0px;top:108px;width:3016px;height:1675px;overflow:hidden;">
<div class="r" style="left:391.0px;top:0.0px;width:2625.0px;height:1675.0px;background:#2a4458;"></div>
<div class="r" style="left:389.5px;top:0.0px;width:1202.5px;height:916.0px;background:#dfe0e5;"></div>
<div class="r" style="left:396.0px;top:0.0px;width:1189.0px;height:904.0px;background:#f5f5fa;"></div>
<div class="r" style="left:399.0px;top:903.0px;width:1186.0px;height:2.0px;background:#8a8e95;"></div>
<div class="r" style="left:1584.0px;top:269.0px;width:1.5px;height:635.0px;background:#9aa0a8;"></div>
<div class="t" style="left:608.0px;top:-6.1px;font-size:19px;color:#5a5a5a;font-weight:400;font-family:'Liberation Sans',sans-serif;transform:translateX(-100%);">Belegnummer</div>
<div class="t" style="left:732.0px;top:-3.1px;font-size:19px;color:#222;font-weight:400;font-family:'Liberation Sans',sans-serif;">Lagerauftrag</div>
<div class="t" style="left:608.0px;top:32.4px;font-size:19px;color:#5a5a5a;font-weight:400;font-family:'Liberation Sans',sans-serif;transform:translateX(-100%);">Kunde</div>
<div class="t" style="left:608.0px;top:69.9px;font-size:19px;color:#5a5a5a;font-weight:400;font-family:'Liberation Sans',sans-serif;transform:translateX(-100%);">Fremdkommission</div>
<div class="t" style="left:608.0px;top:107.9px;font-size:19px;color:#5a5a5a;font-weight:400;font-family:'Liberation Sans',sans-serif;transform:translateX(-100%);">Kommissionsnummer</div>
<div class="r" style="left:396.0px;top:0.0px;width:1189.0px;height:3.0px;background:#f5f5fa;"></div>
<div class="r" style="left:1064.0px;top:-10.0px;width:183.0px;height:31.0px;background:#ffffff;border:1.5px solid #dcdce2;border-radius:3px;box-sizing:border-box;box-shadow:0 1px 1px #d0d0d6;"></div>
<div class="t" style="left:1155.5px;top:-3.2px;font-size:18px;color:#222;font-weight:400;font-family:'Liberation Sans',sans-serif;transform:translateX(-50%);">term/einplanen</div>
<div class="r" style="left:1263.0px;top:-10.0px;width:182.0px;height:31.0px;background:#ffffff;border:1.5px solid #dcdce2;border-radius:3px;box-sizing:border-box;box-shadow:0 1px 1px #d0d0d6;"></div>
<div class="t" style="left:1354.0px;top:-3.2px;font-size:18px;color:#222;font-weight:400;font-family:'Liberation Sans',sans-serif;transform:translateX(-50%);">disponieren</div>
<div class="r" style="left:1064.0px;top:27.0px;width:183.0px;height:33.0px;background:#ffffff;border:1.5px solid #dcdce2;border-radius:3px;box-sizing:border-box;box-shadow:0 1px 1px #d0d0d6;"></div>
<div class="t" style="left:1155.5px;top:35.8px;font-size:18px;color:#222;font-weight:400;font-family:'Liberation Sans',sans-serif;transform:translateX(-50%);">reservieren</div>
<div class="r" style="left:1263.0px;top:27.0px;width:182.0px;height:33.0px;background:#ffffff;border:1.5px solid #dcdce2;border-radius:3px;box-sizing:border-box;box-shadow:0 1px 1px #d0d0d6;"></div>
<div class="t" style="left:1354.0px;top:35.8px;font-size:18px;color:#222;font-weight:400;font-family:'Liberation Sans',sans-serif;transform:translateX(-50%);">reserv (Storno)</div>
<div class="r" style="left:1064.0px;top:66.0px;width:183.0px;height:32.0px;background:#ffffff;border:1.5px solid #dcdce2;border-radius:3px;box-sizing:border-box;box-shadow:0 1px 1px #d0d0d6;"></div>
<div class="t" style="left:1155.5px;top:73.8px;font-size:18px;color:#222;font-weight:400;font-family:'Liberation Sans',sans-serif;transform:translateX(-50%);">freigeben</div>
<div class="r" style="left:1263.0px;top:66.0px;width:182.0px;height:32.0px;background:#ffffff;border:1.5px solid #dcdce2;border-radius:3px;box-sizing:border-box;box-shadow:0 1px 1px #d0d0d6;"></div>
<div class="t" style="left:1354.0px;top:73.8px;font-size:18px;color:#222;font-weight:400;font-family:'Liberation Sans',sans-serif;transform:translateX(-50%);">rücksetzen</div>
<div class="r" style="left:1062.0px;top:109.0px;width:18.0px;height:18.0px;background:#f8f8fb;border:1.5px solid #d6d6dc;box-sizing:border-box;"></div>
<div class="t" style="left:1087.0px;top:109.8px;font-size:18px;color:#8a8a8f;font-weight:400;font-family:'Liberation Sans',sans-serif;">Freigabe Kommir</div>
<div class="r" style="left:399.0px;top:244.0px;width:1.0px;height:1.0px;background:transparent;"></div>
<div class="r" style="left:399.0px;top:244.0px;width:106.0px;height:25.0px;background:#a9c0d3;"></div>
<div class="r" style="left:505.0px;top:244.0px;width:3.0px;height:25.0px;background:#333a44;"></div>
<div class="t" style="left:407.0px;top:248.2px;font-size:17.5px;color:#46555f;font-weight:400;font-family:'Liberation Sans',sans-serif;">Basisdaten</div>
<div class="t" style="left:522.0px;top:249.2px;font-size:17.5px;color:#222;font-weight:700;font-family:'Liberation Sans',sans-serif;">Termine und Mengen</div>
<div class="r" style="left:710.0px;top:244.0px;width:3.0px;height:25.0px;background:#333a44;"></div>
<div class="r" style="left:713.0px;top:244.0px;width:126.0px;height:25.0px;background:#a9c0d3;"></div>
<div class="r" style="left:838.0px;top:244.0px;width:3.0px;height:25.0px;background:#333a44;"></div>
<div class="t" style="left:727.0px;top:248.2px;font-size:17.5px;color:#46555f;font-weight:400;font-family:'Liberation Sans',sans-serif;text-decoration:underline;text-decoration-thickness:1px;">Zusatzdaten</div>
<div class="r" style="left:841.0px;top:244.0px;width:116.0px;height:25.0px;background:#a9c0d3;"></div>
<div class="r" style="left:957.0px;top:244.0px;width:3.0px;height:25.0px;background:#333a44;"></div>
<div class="t" style="left:853.0px;top:248.2px;font-size:17.5px;color:#46555f;font-weight:400;font-family:'Liberation Sans',sans-serif;">Traceability</div>
<div class="r" style="left:960.0px;top:244.0px;width:147.0px;height:25.0px;background:#a9c0d3;"></div>
<div class="r" style="left:1107.0px;top:244.0px;width:3.0px;height:25.0px;background:#333a44;"></div>
<div class="t" style="left:969.0px;top:248.2px;font-size:17.5px;color:#46555f;font-weight:400;font-family:'Liberation Sans',sans-serif;">Instandhaltung</div>
<div class="r" style="left:1110.0px;top:244.0px;width:55.0px;height:25.0px;background:#a9c0d3;"></div>
<div class="r" style="left:1164.0px;top:244.0px;width:3.0px;height:25.0px;background:#333a44;"></div>
<div class="t" style="left:1121.0px;top:248.2px;font-size:17.5px;color:#46555f;font-weight:400;font-family:'Liberation Sans',sans-serif;">Info</div>
<div class="t" style="left:599.0px;top:287.9px;font-size:19px;color:#5a5a5a;font-weight:400;font-family:'Liberation Sans',sans-serif;transform:translateX(-100%);">Wunschtermin</div>
<div class="t" style="left:608.0px;top:289.8px;font-size:18px;color:#222;font-weight:400;font-family:'Liberation Sans',sans-serif;letter-spacing:-0.4px;">23.09.2025</div>
<div class="t" style="left:722.0px;top:288.9px;font-size:19px;color:#222;font-weight:400;font-family:'Liberation Sans',sans-serif;">Di</div>
<div class="r" style="left:768.0px;top:284.0px;width:71.0px;height:31.0px;background:#fbfbfd;"></div>
<div class="t" style="left:772.0px;top:291.3px;font-size:18.5px;color:#888;font-weight:400;font-family:'Liberation Sans',sans-serif;">k.B.</div>
<svg class="r" style="left:821px;top:295px;" width="12" height="8" viewBox="0 0 12 8"><path d="M1 1 L6 6 L11 1" fill="none" stroke="#c8c8cc" stroke-width="1.5"/></svg>
<div class="t" style="left:599.0px;top:324.9px;font-size:19px;color:#5a5a5a;font-weight:400;font-family:'Liberation Sans',sans-serif;transform:translateX(-100%);">Wunschstarttermin</div>
<div class="r" style="left:768.0px;top:321.0px;width:71.0px;height:28.0px;background:#fbfbfd;"></div>
<div class="t" style="left:772.0px;top:325.3px;font-size:18.5px;color:#888;font-weight:400;font-family:'Liberation Sans',sans-serif;">k.B.</div>
<svg class="r" style="left:821px;top:331px;" width="12" height="8" viewBox="0 0 12 8"><path d="M1 1 L6 6 L11 1" fill="none" stroke="#c8c8cc" stroke-width="1.5"/></svg>
<div class="t" style="left:599.0px;top:363.9px;font-size:19px;color:#5a5a5a;font-weight:400;font-family:'Liberation Sans',sans-serif;transform:translateX(-100%);">Endtermin</div>
<div class="t" style="left:608.0px;top:365.8px;font-size:18px;color:#222;font-weight:400;font-family:'Liberation Sans',sans-serif;letter-spacing:-0.4px;">22.09.2025</div>
<div class="t" style="left:722.0px;top:364.9px;font-size:19px;color:#222;font-weight:400;font-family:'Liberation Sans',sans-serif;">Mo</div>
<div class="t" style="left:599.0px;top:419.9px;font-size:19px;color:#5a5a5a;font-weight:400;font-family:'Liberation Sans',sans-serif;transform:translateX(-100%);">Produktionsmenge</div>
<div class="t" style="left:719.0px;top:421.3px;font-size:18.5px;color:#222;font-weight:400;font-family:'Liberation Sans',sans-serif;">20</div>
<div class="t" style="left:836.0px;top:421.3px;font-size:18.5px;color:#222;font-weight:400;font-family:'Liberation Sans',sans-serif;">Stk</div>
<div class="t" style="left:599.0px;top:457.9px;font-size:19px;color:#5a5a5a;font-weight:400;font-family:'Liberation Sans',sans-serif;transform:translateX(-100%);">Entnahmemenge</div>
<div class="t" style="left:719.0px;top:459.3px;font-size:18.5px;color:#222;font-weight:400;font-family:'Liberation Sans',sans-serif;">0</div>
<div class="t" style="left:836.0px;top:459.3px;font-size:18.5px;color:#222;font-weight:400;font-family:'Liberation Sans',sans-serif;">Stk</div>
<div class="t" style="left:599.0px;top:494.9px;font-size:19px;color:#5a5a5a;font-weight:400;font-family:'Liberation Sans',sans-serif;transform:translateX(-100%);">Anfahrausschuss</div>
<div class="t" style="left:719.0px;top:496.3px;font-size:18.5px;color:#222;font-weight:400;font-family:'Liberation Sans',sans-serif;">0</div>
<div class="t" style="left:836.0px;top:496.3px;font-size:18.5px;color:#222;font-weight:400;font-family:'Liberation Sans',sans-serif;">Stk</div>
<div class="t" style="left:599.0px;top:552.9px;font-size:19px;color:#5a5a5a;font-weight:400;font-family:'Liberation Sans',sans-serif;transform:translateX(-100%);">Berech Fertigmenge</div>
<div class="r" style="left:608.0px;top:550.0px;width:371.0px;height:26.0px;background:#fbfbfd;"></div>
<div class="t" style="left:612.0px;top:552.3px;font-size:18.5px;color:#888;font-weight:400;font-family:'Liberation Sans',sans-serif;">Mittelwert gefertigte Kuppelprodukte</div>
<svg class="r" style="left:961px;top:559px;" width="12" height="8" viewBox="0 0 12 8"><path d="M1 1 L6 6 L11 1" fill="none" stroke="#c8c8cc" stroke-width="1.5"/></svg>
<div class="t" style="left:599.0px;top:589.9px;font-size:19px;color:#5a5a5a;font-weight:400;font-family:'Liberation Sans',sans-serif;transform:translateX(-100%);">Durchlaufzeit</div>
<div class="t" style="left:617.0px;top:591.3px;font-size:18.5px;color:#222;font-weight:400;font-family:'Liberation Sans',sans-serif;">3</div>
<div class="r" style="left:682.0px;top:586.0px;width:87.0px;height:28.0px;background:#fbfbfd;"></div>
<div class="t" style="left:686.0px;top:590.3px;font-size:18.5px;color:#888;font-weight:400;font-family:'Liberation Sans',sans-serif;">KTg</div>
<svg class="r" style="left:751px;top:596px;" width="12" height="8" viewBox="0 0 12 8"><path d="M1 1 L6 6 L11 1" fill="none" stroke="#c8c8cc" stroke-width="1.5"/></svg>
<div class="t" style="left:599.0px;top:627.9px;font-size:19px;color:#5a5a5a;font-weight:400;font-family:'Liberation Sans',sans-serif;transform:translateX(-100%);">DLZ krit Pfad</div>
<div class="t" style="left:664.0px;top:628.9px;font-size:19px;color:#222;font-weight:400;font-family:'Liberation Mono',sans-serif;">35,83</div>
<div class="t" style="left:760.0px;top:629.3px;font-size:18.5px;color:#222;font-weight:400;font-family:'Liberation Sans',sans-serif;">Std</div>
<div class="t" style="left:599.0px;top:665.9px;font-size:19px;color:#5a5a5a;font-weight:400;font-family:'Liberation Sans',sans-serif;transform:translateX(-100%);">Priorität</div>
<div class="t" style="left:613.0px;top:667.3px;font-size:18.5px;color:#222;font-weight:400;font-family:'Liberation Sans',sans-serif;">4</div>
<div class="t" style="left:648.0px;top:666.9px;font-size:19px;color:#222;font-weight:400;font-family:'Liberation Sans',sans-serif;">Lagerauftrag</div>
<div class="t" style="left:1165.0px;top:288.9px;font-size:19px;color:#5a5a5a;font-weight:400;font-family:'Liberation Sans',sans-serif;transform:translateX(-100%);">TerminierungsKz</div>
<div class="r" style="left:1175.0px;top:284.0px;width:215.0px;height:31.0px;background:#fbfbfd;"></div>
<div class="t" style="left:1179.0px;top:291.3px;font-size:18.5px;color:#888;font-weight:400;font-family:'Liberation Sans',sans-serif;">Optimierung</div>
<svg class="r" style="left:1372px;top:295px;" width="12" height="8" viewBox="0 0 12 8"><path d="M1 1 L6 6 L11 1" fill="none" stroke="#c8c8cc" stroke-width="1.5"/></svg>
<div class="t" style="left:1165.0px;top:324.9px;font-size:19px;color:#5a5a5a;font-weight:400;font-family:'Liberation Sans',sans-serif;transform:translateX(-100%);">Optimierungsziel</div>
<div class="r" style="left:1175.0px;top:321.0px;width:215.0px;height:28.0px;background:#fbfbfd;"></div>
<div class="t" style="left:1179.0px;top:325.3px;font-size:18.5px;color:#888;font-weight:400;font-family:'Liberation Sans',sans-serif;">Wunschtermin</div>
<svg class="r" style="left:1372px;top:331px;" width="12" height="8" viewBox="0 0 12 8"><path d="M1 1 L6 6 L11 1" fill="none" stroke="#c8c8cc" stroke-width="1.5"/></svg>
<div class="t" style="left:1165.0px;top:363.9px;font-size:19px;color:#5a5a5a;font-weight:400;font-family:'Liberation Sans',sans-serif;transform:translateX(-100%);">Termin man Opt</div>
<div class="t" style="left:1364.0px;top:364.9px;font-size:19px;color:#222;font-weight:400;font-family:'Liberation Sans',sans-serif;">Di</div>
<div class="t" style="left:1165.0px;top:401.9px;font-size:19px;color:#5a5a5a;font-weight:400;font-family:'Liberation Sans',sans-serif;transform:translateX(-100%);">Überlast</div>
<div class="t" style="left:1175.0px;top:402.9px;font-size:19px;color:#222;font-weight:400;font-family:'Liberation Sans',sans-serif;">ohne</div>
<div class="r" style="left:1172.0px;top:459.0px;width:18.0px;height:18.0px;background:#f8f8fb;border:1.5px solid #d6d6dc;box-sizing:border-box;"></div>
<div class="t" style="left:1196.0px;top:459.8px;font-size:18px;color:#8a8a8f;font-weight:400;font-family:'Liberation Sans',sans-serif;">Res gelöscht</div>
<div class="r" style="left:1172.0px;top:497.0px;width:18.0px;height:18.0px;background:#f8f8fb;border:1.5px solid #d6d6dc;box-sizing:border-box;border-radius:3px;"></div>
<div class="t" style="left:1196.0px;top:496.8px;font-size:18px;color:#8a8a8f;font-weight:400;font-family:'Liberation Sans',sans-serif;">tr - neu</div>
<div class="t" style="left:1165.0px;top:551.9px;font-size:19px;color:#5a5a5a;font-weight:400;font-family:'Liberation Sans',sans-serif;transform:translateX(-100%);">%Adressmatrix</div>
<div class="t" style="left:1175.0px;top:553.8px;font-size:18px;color:#222;font-weight:400;font-family:'Liberation Mono',sans-serif;">100,00%</div>
<div class="t" style="left:1165.0px;top:589.9px;font-size:19px;color:#5a5a5a;font-weight:400;font-family:'Liberation Sans',sans-serif;transform:translateX(-100%);">%Platzmatrix</div>
<div class="t" style="left:1175.0px;top:591.8px;font-size:18px;color:#222;font-weight:400;font-family:'Liberation Mono',sans-serif;">100,00%</div>
<div class="t" style="left:1165.0px;top:627.9px;font-size:19px;color:#5a5a5a;font-weight:400;font-family:'Liberation Sans',sans-serif;transform:translateX(-100%);">%Wartezeit</div>
<div class="t" style="left:1175.0px;top:629.8px;font-size:18px;color:#222;font-weight:400;font-family:'Liberation Mono',sans-serif;">100,00%</div>
<div class="r" style="left:2991.0px;top:368.0px;width:25.0px;height:1276.0px;background:#4e667c;"></div>
<div class="r" style="left:2998.0px;top:1003.0px;width:10.0px;height:2.0px;background:#8596a6;"></div>
<div class="r" style="left:2998.0px;top:1007.0px;width:10.0px;height:2.0px;background:#8596a6;"></div>
<div class="r" style="left:2998.0px;top:1011.0px;width:10.0px;height:2.0px;background:#8596a6;"></div>
<div class="r" style="left:2999.0px;top:13.0px;width:8.0px;height:6.0px;background:#4e667c;"></div>
<div class="r" style="left:1592.0px;top:0.0px;width:1424.0px;height:2.0px;background:#25394a;"></div>
</div>
<div class="r" style="left:385.0px;top:1019.0px;width:1207.0px;height:5.0px;background:#1f2e3b;"></div>
<div class="r" style="left:1592.0px;top:1022.5px;width:1365.0px;height:1.5px;background:#1f2a36;"></div>
<div class="r" style="left:389.5px;top:1024.0px;width:2562.5px;height:43.0px;background:linear-gradient(180deg,#ac6a7d 0%,#b8658a 55%,#ae6a7f 100%);"></div>
<div class="t" style="left:400.0px;top:1034.1px;font-size:20px;color:#fbeff3;font-weight:400;font-family:'Liberation Sans',sans-serif;">Prozessgantt (Struktur) LA-80213108 15533</div>
<svg class="r" style="left:2837px;top:1037px;" width="28" height="20" viewBox="0 0 28 20"><rect x="2" y="8" width="12" height="10" fill="none" stroke="#fff" stroke-width="3"/><path d="M8 7 L8 2 L25 2 L25 12 L16 12" fill="none" stroke="#fff" stroke-width="3"/></svg>
<svg class="r" style="left:2878px;top:1037px;" width="24" height="20" viewBox="0 0 24 20"><rect x="2.5" y="2.5" width="18" height="15" fill="none" stroke="#fff" stroke-width="4"/></svg>
<svg class="r" style="left:2920px;top:1036px;" width="24" height="22" viewBox="0 0 24 22"><path d="M3 3 L21 19 M21 3 L3 19" stroke="#fff" stroke-width="4.5"/></svg>
<div class="r" style="left:389.5px;top:1067.0px;width:2562.5px;height:88.0px;background:#cfd8e2;"></div>
<div class="r" style="left:389.5px;top:1067.0px;width:2562.5px;height:2.5px;background:#e2e2e8;"></div>
<div class="t" style="left:406.0px;top:1079.3px;font-size:17.4px;color:#333;font-weight:400;font-family:'Liberation Sans',sans-serif;">Datei</div>
<div class="t" style="left:464.0px;top:1079.3px;font-size:17.4px;color:#333;font-weight:400;font-family:'Liberation Sans',sans-serif;">Funktion</div>
<div class="t" style="left:553.0px;top:1079.3px;font-size:17.4px;color:#333;font-weight:400;font-family:'Liberation Sans',sans-serif;">Extras</div>
<div class="t" style="left:618.0px;top:1079.3px;font-size:17.4px;color:#333;font-weight:400;font-family:'Liberation Sans',sans-serif;">Info</div>
<svg class="r" style="left:405px;top:1111px;" width="28" height="30" viewBox="0 0 28 30"><rect x="3" y="3" width="3.5" height="24" fill="#4a5560"/><rect x="11" y="3" width="4" height="24" fill="#e02040"/><rect x="20" y="3" width="3.5" height="24" fill="#4a5560"/></svg>
<svg class="r" style="left:444px;top:1111px;" width="28" height="30" viewBox="0 0 28 30"><rect x="3" y="3" width="3.5" height="24" fill="#4a5560"/><rect x="11" y="3" width="4" height="24" fill="#3aa83a"/><rect x="20" y="3" width="3.5" height="24" fill="#4a5560"/></svg>
<svg class="r" style="left:484px;top:1111px;" width="28" height="30" viewBox="0 0 28 30"><rect x="3" y="3" width="3.5" height="24" fill="#4a5560"/><rect x="11" y="3" width="4" height="24" fill="#3a90d8"/><rect x="20" y="3" width="3.5" height="24" fill="#4a5560"/></svg>
<svg class="r" style="left:522px;top:1111px;" width="28" height="28" viewBox="0 0 28 28"><g fill="#3a4a58"><path d="M1 1 L9 1 L1 9 Z"/><path d="M27 1 L19 1 L27 9 Z"/><path d="M1 27 L9 27 L1 19 Z"/><path d="M27 27 L19 27 L27 19 Z"/><rect x="9" y="9" width="10" height="10"/></g></svg>
<svg class="r" style="left:561px;top:1110px;" width="30" height="30" viewBox="0 0 30 30"><circle cx="15" cy="15" r="9" fill="none" stroke="#3a4a58" stroke-width="2.5"/><path d="M15 1 L12 5 L18 5 Z M15 29 L12 25 L18 25 Z M1 15 L5 12 L5 18 Z M29 15 L25 12 L25 18 Z" fill="#3a4a58"/><path d="M10 15 L20 15 M15 10 L15 20" stroke="#3aa030" stroke-width="3"/></svg>
<svg class="r" style="left:600px;top:1110px;" width="30" height="30" viewBox="0 0 30 30"><circle cx="15" cy="15" r="9" fill="none" stroke="#3a4a58" stroke-width="2.5"/><path d="M15 1 L12 5 L18 5 Z M15 29 L12 25 L18 25 Z M1 15 L5 12 L5 18 Z M29 15 L25 12 L25 18 Z" fill="#3a4a58"/><path d="M9 15 L21 15" stroke="#e02040" stroke-width="3"/></svg>
<svg class="r" style="left:640px;top:1110px;" width="30" height="30" viewBox="0 0 30 30"><circle cx="15" cy="15" r="9" fill="none" stroke="#3a4a58" stroke-width="2.5"/><path d="M15 1 L12 5 L18 5 Z M15 29 L12 25 L18 25 Z M1 15 L5 12 L5 18 Z M29 15 L25 12 L25 18 Z" fill="#3a4a58"/><circle cx="15" cy="15" r="4" fill="#3a4a58"/></svg>
<svg class="r" style="left:680px;top:1110px;" width="30" height="30" viewBox="0 0 30 30"><circle cx="15" cy="15" r="9" fill="none" stroke="#3a4a58" stroke-width="2.5"/><path d="M15 1 L12 5 L18 5 Z M15 29 L12 25 L18 25 Z M1 15 L5 12 L5 18 Z M29 15 L25 12 L25 18 Z" fill="#3a4a58"/><circle cx="15" cy="15" r="4" fill="#3a4a58"/></svg>
<svg class="r" style="left:719px;top:1110px;" width="30" height="30" viewBox="0 0 30 30"><path d="M4 13 Q6 5 15 5 Q21 5 24 9 L27 6 L27 15 L18 15 L21 12 Q19 9 15 9 Q9 9 8 14 Z" fill="#3a4a58"/><path d="M26 17 Q24 25 15 25 Q9 25 6 21 L3 24 L3 15 L12 15 L9 18 Q11 21 15 21 Q21 21 22 16 Z" fill="#3a4a58"/></svg>
<div class="r" style="left:753.0px;top:1107.0px;width:91.0px;height:36.0px;background:#ffffff;"></div>
<div class="t" style="left:763.0px;top:1117.9px;font-size:19px;color:#222;font-weight:400;font-family:'Liberation Sans',sans-serif;">156%</div>
<div class="r" style="left:844.0px;top:1107.0px;width:20.0px;height:36.0px;background:#e4e6ea;"></div>
<svg class="r" style="left:847px;top:1121px;" width="14" height="8" viewBox="0 0 14 8"><path d="M1 1 L13 1 L7 7 Z" fill="#222"/></svg>
<div class="r" style="left:869.0px;top:1108.0px;width:127.0px;height:34.0px;background:linear-gradient(#f2f2f4,#e2e2e6);border:1.5px solid #8c8c90;box-sizing:border-box;"></div>
<div class="t" style="left:875.0px;top:1116.9px;font-size:19px;color:#333;font-weight:400;font-family:'Liberation Sans',sans-serif;">Tage</div>
<svg class="r" style="left:974px;top:1121px;" width="14" height="8" viewBox="0 0 14 8"><path d="M1 1 L13 1 L7 7 Z" fill="#222"/></svg>
<svg class="r" style="left:1935px;top:1112px;" width="30" height="28" viewBox="0 0 30 28"><rect x="8" y="1" width="14" height="8" fill="#3a4a58"/><rect x="1" y="9" width="28" height="12" rx="2" fill="#3a4a58"/><rect x="6" y="17" width="18" height="10" fill="#3a4a58"/><rect x="8" y="20" width="14" height="1.5" fill="#cfd8e2"/><rect x="8" y="23" width="14" height="1.5" fill="#cfd8e2"/></svg>
<svg class="r" style="left:1975px;top:1115px;" width="30" height="22" viewBox="0 0 30 22"><rect x="1" y="1" width="28" height="20" fill="#3a4a58"/><path d="M2 2 L15 12 L28 2" fill="none" stroke="#cfd8e2" stroke-width="2"/><path d="M2 20 L11 11 M28 20 L19 11" stroke="#cfd8e2" stroke-width="1.5"/></svg>
<div class="r" style="left:389.5px;top:1155.0px;width:2556.5px;height:628.0px;background:#f5f6fa;"></div>
<div class="r" style="left:2946.0px;top:1155.0px;width:6.0px;height:628.0px;background:#dcdde3;"></div>
<div class="t" style="left:598.0px;top:1167.8px;font-size:18px;color:#555;font-weight:400;font-family:'Liberation Sans',sans-serif;transform:translateX(-100%);">Teil</div>
<div class="t" style="left:598.0px;top:1206.8px;font-size:18px;color:#555;font-weight:400;font-family:'Liberation Sans',sans-serif;transform:translateX(-100%);">Bezeichnung</div>
<div class="t" style="left:900.0px;top:1168.8px;font-size:18px;color:#555;font-weight:400;font-family:'Liberation Sans',sans-serif;">RMNr</div>
<div class="t" style="left:1316.0px;top:1168.8px;font-size:18px;color:#555;font-weight:400;font-family:'Liberation Sans',sans-serif;transform:translateX(-100%);">Aktivität</div>
<div class="t" style="left:1316.0px;top:1206.8px;font-size:18px;color:#555;font-weight:400;font-family:'Liberation Sans',sans-serif;transform:translateX(-100%);">Bezeichnung</div>
<div class="t" style="left:1789.0px;top:1168.8px;font-size:18px;color:#555;font-weight:400;font-family:'Liberation Sans',sans-serif;transform:translateX(-100%);">Start</div>
<div class="t" style="left:1789.0px;top:1206.8px;font-size:18px;color:#555;font-weight:400;font-family:'Liberation Sans',sans-serif;transform:translateX(-100%);">Ende</div>
<div class="t" style="left:2119.0px;top:1168.7px;font-size:18.1px;color:#555;font-weight:400;font-family:'Liberation Sans',sans-serif;transform:translateX(-100%);">Bedarfsmenge</div>
<div class="t" style="left:2119.0px;top:1206.7px;font-size:18.1px;color:#555;font-weight:400;font-family:'Liberation Sans',sans-serif;transform:translateX(-100%);">offene Menge</div>
<div class="r" style="left:398.0px;top:1249.0px;width:401.0px;height:534.0px;background:#ffffff;"></div>
<div class="r" style="left:398.0px;top:1249.0px;width:401.0px;height:132.0px;background:#e7e8ef;"></div>
<div class="r" style="left:398.0px;top:1381.0px;width:401.0px;height:147.0px;background:#8eb0cf;"></div>
<div class="r" style="left:398.0px;top:1528.0px;width:401.0px;height:184.0px;background:#efeff2;"></div>
<div class="r" style="left:397.0px;top:1249.0px;width:2.0px;height:463.0px;background:#111;"></div>
<div class="r" style="left:459.0px;top:1249.0px;width:2.0px;height:463.0px;background:#111;"></div>
<div class="r" style="left:520.0px;top:1249.0px;width:2.0px;height:463.0px;background:#111;"></div>
<div class="r" style="left:582.0px;top:1249.0px;width:2.0px;height:463.0px;background:#111;"></div>
<div class="r" style="left:667.0px;top:1249.0px;width:2.0px;height:463.0px;background:#111;"></div>
<div class="r" style="left:728.0px;top:1249.0px;width:2.0px;height:463.0px;background:#111;"></div>
<div class="r" style="left:797.0px;top:1249.0px;width:2.0px;height:463.0px;background:#111;"></div>
<div class="r" style="left:398.0px;top:1248.0px;width:401.0px;height:2.0px;background:#111;"></div>
<div class="r" style="left:398.0px;top:1379.0px;width:401.0px;height:3.0px;background:#111;"></div>
<div class="r" style="left:398.0px;top:1526.0px;width:401.0px;height:2.0px;background:#111;"></div>
<div class="r" style="left:398.0px;top:1618.0px;width:401.0px;height:2.0px;background:#111;"></div>
<div class="r" style="left:398.0px;top:1710.0px;width:401.0px;height:2.0px;background:#111;"></div>
<div class="t" style="left:435.0px;top:1297.0px;font-size:35px;color:#111;font-weight:700;font-family:'Liberation Sans',sans-serif;transform:translateX(-50%);">St</div>
<div class="t" style="left:495.0px;top:1297.0px;font-size:35px;color:#111;font-weight:700;font-family:'Liberation Sans',sans-serif;transform:translateX(-50%);">ZF</div>
<div class="t" style="left:557.0px;top:1297.0px;font-size:35px;color:#111;font-weight:700;font-family:'Liberation Sans',sans-serif;transform:translateX(-50%);">ZF</div>
<div class="t" style="left:631.5px;top:1297.0px;font-size:35px;color:#111;font-weight:700;font-family:'Liberation Sans',sans-serif;transform:translateX(-50%);">TA</div>
<div class="t" style="left:705.0px;top:1297.0px;font-size:35px;color:#111;font-weight:700;font-family:'Liberation Sans',sans-serif;transform:translateX(-50%);">R</div>
<div class="t" style="left:429.0px;top:1435.4px;font-size:35px;color:#111;font-weight:700;font-family:'Liberation Sans',sans-serif;transform:translateX(-50%);">-</div>
<svg class="r" style="left:471px;top:1436px;" width="38" height="38" viewBox="0 0 38 38"><defs><radialGradient id="gc" cx="40%" cy="35%" r="70%"><stop offset="0" stop-color="#5cdc1c"/><stop offset="1" stop-color="#359e12"/></radialGradient></defs><circle cx="19" cy="19" r="18" fill="url(#gc)"/><path d="M10 19 L16 25 L28 12" fill="none" stroke="#fff" stroke-width="4.5"/></svg>
<svg class="r" style="left:533px;top:1436px;" width="37" height="38" viewBox="0 0 37 38"><defs><linearGradient id="gi" x1="0" y1="0" x2="0" y2="1"><stop offset="0" stop-color="#3aacf6"/><stop offset="1" stop-color="#1a80d6"/></linearGradient></defs><rect x="3" y="3" width="32" height="32" rx="1" fill="url(#gi)"/><circle cx="18.5" cy="9" r="3.5" fill="#fff"/><path d="M11 15 L22 15 L22 29 L26 29 L26 33 L11 33 L11 29 L15 29 L15 19 L11 19 Z" fill="#fff"/></svg>
<div class="t" style="left:630.0px;top:1436.4px;font-size:35px;color:#111;font-weight:700;font-family:'Liberation Sans',sans-serif;transform:translateX(-50%);">9</div>
<div class="t" style="left:742.0px;top:1436.4px;font-size:35px;color:#111;font-weight:700;font-family:'Liberation Sans',sans-serif;">PPA</div>
<svg class="r" style="left:533px;top:1556px;" width="38" height="38" viewBox="0 0 38 38"><defs><radialGradient id="gc" cx="40%" cy="35%" r="70%"><stop offset="0" stop-color="#5cdc1c"/><stop offset="1" stop-color="#359e12"/></radialGradient></defs><circle cx="19" cy="19" r="18" fill="url(#gc)"/><path d="M10 19 L16 25 L28 12" fill="none" stroke="#fff" stroke-width="4.5"/></svg>
<div class="t" style="left:631.0px;top:1556.4px;font-size:35px;color:#111;font-weight:700;font-family:'Liberation Sans',sans-serif;transform:translateX(-50%);">10</div>
<div class="t" style="left:742.0px;top:1556.4px;font-size:35px;color:#111;font-weight:700;font-family:'Liberation Sans',sans-serif;">PPA</div>
<div class="t" style="left:429.0px;top:1648.4px;font-size:35px;color:#111;font-weight:700;font-family:'Liberation Sans',sans-serif;transform:translateX(-50%);">+</div>
<svg class="r" style="left:533px;top:1647px;" width="37" height="38" viewBox="0 0 37 38"><defs><linearGradient id="gi" x1="0" y1="0" x2="0" y2="1"><stop offset="0" stop-color="#3aacf6"/><stop offset="1" stop-color="#1a80d6"/></linearGradient></defs><rect x="3" y="3" width="32" height="32" rx="1" fill="url(#gi)"/><circle cx="18.5" cy="9" r="3.5" fill="#fff"/><path d="M11 15 L22 15 L22 29 L26 29 L26 33 L11 33 L11 29 L15 29 L15 19 L11 19 Z" fill="#fff"/></svg>
<div class="t" style="left:630.0px;top:1648.4px;font-size:35px;color:#111;font-weight:700;font-family:'Liberation Sans',sans-serif;transform:translateX(-50%);">6</div>
<div class="t" style="left:704.0px;top:1648.4px;font-size:35px;color:#111;font-weight:700;font-family:'Liberation Sans',sans-serif;transform:translateX(-50%);">X</div>
<div class="t" style="left:742.0px;top:1648.4px;font-size:35px;color:#111;font-weight:700;font-family:'Liberation Sans',sans-serif;">PPA</div>
<div class="r" style="left:800.0px;top:1249.0px;width:6.0px;height:534.0px;background:#f5f6fa;"></div>
<div class="r" style="left:798.0px;top:1249.0px;width:2.0px;height:534.0px;background:#111;"></div>
<div class="r" style="left:806px;top:1249px;width:2112px;height:534px;overflow:hidden;background:#ffffff;">
<div class="r" style="left:0.0px;top:0.0px;width:2112.0px;height:131.0px;background:#e8e9f2;"></div>
<div class="r" style="left:-9.9px;top:132.0px;width:71.9px;height:146.0px;background:#dcdcdf;"></div>
<div class="r" style="left:-9.9px;top:279.0px;width:71.9px;height:91.0px;background:#dcdcdf;"></div>
<div class="r" style="left:-9.9px;top:371.0px;width:71.9px;height:91.0px;background:#dcdcdf;"></div>
<div class="r" style="left:241.8px;top:132.0px;width:71.9px;height:146.0px;background:#dcdcdf;"></div>
<div class="r" style="left:241.8px;top:279.0px;width:71.9px;height:91.0px;background:#dcdcdf;"></div>
<div class="r" style="left:241.8px;top:371.0px;width:71.9px;height:91.0px;background:#dcdcdf;"></div>
<div class="r" style="left:493.4px;top:132.0px;width:71.9px;height:146.0px;background:#dcdcdf;"></div>
<div class="r" style="left:493.4px;top:279.0px;width:71.9px;height:91.0px;background:#dcdcdf;"></div>
<div class="r" style="left:493.4px;top:371.0px;width:71.9px;height:91.0px;background:#dcdcdf;"></div>
<div class="r" style="left:745.1px;top:132.0px;width:71.9px;height:146.0px;background:#dcdcdf;"></div>
<div class="r" style="left:745.1px;top:279.0px;width:71.9px;height:91.0px;background:#dcdcdf;"></div>
<div class="r" style="left:745.1px;top:371.0px;width:71.9px;height:91.0px;background:#dcdcdf;"></div>
<div class="r" style="left:996.8px;top:132.0px;width:71.9px;height:146.0px;background:#dcdcdf;"></div>
<div class="r" style="left:996.8px;top:279.0px;width:71.9px;height:91.0px;background:#dcdcdf;"></div>
<div class="r" style="left:996.8px;top:371.0px;width:71.9px;height:91.0px;background:#dcdcdf;"></div>
<div class="r" style="left:1248.4px;top:132.0px;width:71.9px;height:146.0px;background:#dcdcdf;"></div>
<div class="r" style="left:1248.4px;top:279.0px;width:71.9px;height:91.0px;background:#dcdcdf;"></div>
<div class="r" style="left:1248.4px;top:371.0px;width:71.9px;height:91.0px;background:#dcdcdf;"></div>
<div class="r" style="left:1500.1px;top:132.0px;width:71.9px;height:146.0px;background:#dcdcdf;"></div>
<div class="r" style="left:1500.1px;top:279.0px;width:71.9px;height:91.0px;background:#dcdcdf;"></div>
<div class="r" style="left:1500.1px;top:371.0px;width:71.9px;height:91.0px;background:#dcdcdf;"></div>
<div class="r" style="left:1751.7px;top:132.0px;width:71.9px;height:146.0px;background:#dcdcdf;"></div>
<div class="r" style="left:1751.7px;top:279.0px;width:71.9px;height:91.0px;background:#dcdcdf;"></div>
<div class="r" style="left:1751.7px;top:371.0px;width:71.9px;height:91.0px;background:#dcdcdf;"></div>
<div class="r" style="left:2003.4px;top:132.0px;width:71.9px;height:146.0px;background:#dcdcdf;"></div>
<div class="r" style="left:2003.4px;top:279.0px;width:71.9px;height:91.0px;background:#dcdcdf;"></div>
<div class="r" style="left:2003.4px;top:371.0px;width:71.9px;height:91.0px;background:#dcdcdf;"></div>
<div class="r" style="left:61.5px;top:132px;width:0;height:402px;border-left:1.5px dashed #9c9ca0;"></div>
<div class="r" style="left:313.2px;top:132px;width:0;height:402px;border-left:1.5px dashed #9c9ca0;"></div>
<div class="r" style="left:564.8px;top:132px;width:0;height:402px;border-left:1.5px dashed #9c9ca0;"></div>
<div class="r" style="left:816.5px;top:132px;width:0;height:402px;border-left:1.5px dashed #9c9ca0;"></div>
<div class="r" style="left:1068.2px;top:132px;width:0;height:402px;border-left:1.5px dashed #9c9ca0;"></div>
<div class="r" style="left:1319.8px;top:132px;width:0;height:402px;border-left:1.5px dashed #9c9ca0;"></div>
<div class="r" style="left:1571.5px;top:132px;width:0;height:402px;border-left:1.5px dashed #9c9ca0;"></div>
<div class="r" style="left:1823.1px;top:132px;width:0;height:402px;border-left:1.5px dashed #9c9ca0;"></div>
<div class="r" style="left:2074.8px;top:132px;width:0;height:402px;border-left:1.5px dashed #9c9ca0;"></div>
<div class="r" style="left:636.5px;top:132.0px;width:1.5px;height:402.0px;background:#666;"></div>
<div class="r" style="left:1751.0px;top:132.0px;width:1.5px;height:402.0px;background:#666;"></div>
<div class="r" style="left:636.2px;top:0.0px;width:2.0px;height:63.0px;background:#111;"></div>
<div class="r" style="left:1750.7px;top:0.0px;width:2.0px;height:63.0px;background:#111;"></div>
<div class="r" style="left:0.0px;top:0.0px;width:2112.0px;height:2.0px;background:#111;"></div>
<div class="r" style="left:0.0px;top:62.0px;width:2112.0px;height:2.0px;background:#111;"></div>
<div class="r" style="left:0.0px;top:130.0px;width:2112.0px;height:2.0px;background:#111;"></div>
<div class="r" style="left:0.0px;top:278.0px;width:2112.0px;height:1.7px;background:#2a2a2a;"></div>
<div class="r" style="left:0.0px;top:370.0px;width:2112.0px;height:1.7px;background:#2a2a2a;"></div>
<div class="r" style="left:0.0px;top:462.0px;width:2112.0px;height:1.7px;background:#2a2a2a;"></div>
<div class="r" style="left:0.0px;top:0.0px;width:2.0px;height:534.0px;background:#111;"></div>
<div class="t" style="left:29.0px;top:14.9px;font-size:32px;color:#111;font-weight:400;font-family:'Liberation Sans',sans-serif;">Sep 2025</div>
<div class="t" style="left:1130.0px;top:13.9px;font-size:32px;color:#111;font-weight:400;font-family:'Liberation Sans',sans-serif;">Okt 2025</div>
<div class="t" style="left:67.0px;top:72.9px;font-size:32px;color:#111;font-weight:400;font-family:'Liberation Sans',sans-serif;">15</div>
<div class="t" style="left:318.7px;top:72.9px;font-size:32px;color:#111;font-weight:400;font-family:'Liberation Sans',sans-serif;">22</div>
<div class="t" style="left:570.3px;top:72.9px;font-size:32px;color:#111;font-weight:400;font-family:'Liberation Sans',sans-serif;">29</div>
<div class="t" style="left:822.0px;top:72.9px;font-size:32px;color:#111;font-weight:400;font-family:'Liberation Sans',sans-serif;">06</div>
<div class="t" style="left:1073.7px;top:72.9px;font-size:32px;color:#111;font-weight:400;font-family:'Liberation Sans',sans-serif;">13</div>
<div class="t" style="left:1325.3px;top:72.9px;font-size:32px;color:#111;font-weight:400;font-family:'Liberation Sans',sans-serif;">20</div>
<div class="t" style="left:1577.0px;top:72.9px;font-size:32px;color:#111;font-weight:400;font-family:'Liberation Sans',sans-serif;">27</div>
<div class="t" style="left:1828.6px;top:72.9px;font-size:32px;color:#111;font-weight:400;font-family:'Liberation Sans',sans-serif;">03</div>
<div class="t" style="left:2080.3px;top:72.9px;font-size:32px;color:#111;font-weight:400;font-family:'Liberation Sans',sans-serif;">10</div>
<div class="r" style="left:25.0px;top:119.0px;width:2.0px;height:12.0px;background:#111;"></div>
<div class="r" style="left:61.0px;top:108.0px;width:2.0px;height:23.0px;background:#111;"></div>
<div class="r" style="left:97.0px;top:119.0px;width:2.0px;height:12.0px;background:#111;"></div>
<div class="r" style="left:132.9px;top:119.0px;width:2.0px;height:12.0px;background:#111;"></div>
<div class="r" style="left:168.9px;top:119.0px;width:2.0px;height:12.0px;background:#111;"></div>
<div class="r" style="left:204.8px;top:119.0px;width:2.0px;height:12.0px;background:#111;"></div>
<div class="r" style="left:240.8px;top:119.0px;width:2.0px;height:12.0px;background:#111;"></div>
<div class="r" style="left:276.7px;top:119.0px;width:2.0px;height:12.0px;background:#111;"></div>
<div class="r" style="left:312.7px;top:108.0px;width:2.0px;height:23.0px;background:#111;"></div>
<div class="r" style="left:348.6px;top:119.0px;width:2.0px;height:12.0px;background:#111;"></div>
<div class="r" style="left:384.6px;top:119.0px;width:2.0px;height:12.0px;background:#111;"></div>
<div class="r" style="left:420.5px;top:119.0px;width:2.0px;height:12.0px;background:#111;"></div>
<div class="r" style="left:456.5px;top:119.0px;width:2.0px;height:12.0px;background:#111;"></div>
<div class="r" style="left:492.4px;top:119.0px;width:2.0px;height:12.0px;background:#111;"></div>
<div class="r" style="left:528.4px;top:119.0px;width:2.0px;height:12.0px;background:#111;"></div>
<div class="r" style="left:564.3px;top:108.0px;width:2.0px;height:23.0px;background:#111;"></div>
<div class="r" style="left:600.3px;top:119.0px;width:2.0px;height:12.0px;background:#111;"></div>
<div class="r" style="left:636.2px;top:119.0px;width:2.0px;height:12.0px;background:#111;"></div>
<div class="r" style="left:672.2px;top:119.0px;width:2.0px;height:12.0px;background:#111;"></div>
<div class="r" style="left:708.1px;top:119.0px;width:2.0px;height:12.0px;background:#111;"></div>
<div class="r" style="left:744.1px;top:119.0px;width:2.0px;height:12.0px;background:#111;"></div>
<div class="r" style="left:780.0px;top:119.0px;width:2.0px;height:12.0px;background:#111;"></div>
<div class="r" style="left:816.0px;top:108.0px;width:2.0px;height:23.0px;background:#111;"></div>
<div class="r" style="left:851.9px;top:119.0px;width:2.0px;height:12.0px;background:#111;"></div>
<div class="r" style="left:887.9px;top:119.0px;width:2.0px;height:12.0px;background:#111;"></div>
<div class="r" style="left:923.8px;top:119.0px;width:2.0px;height:12.0px;background:#111;"></div>
<div class="r" style="left:959.8px;top:119.0px;width:2.0px;height:12.0px;background:#111;"></div>
<div class="r" style="left:995.8px;top:119.0px;width:2.0px;height:12.0px;background:#111;"></div>
<div class="r" style="left:1031.7px;top:119.0px;width:2.0px;height:12.0px;background:#111;"></div>
<div class="r" style="left:1067.7px;top:108.0px;width:2.0px;height:23.0px;background:#111;"></div>
<div class="r" style="left:1103.6px;top:119.0px;width:2.0px;height:12.0px;background:#111;"></div>
<div class="r" style="left:1139.6px;top:119.0px;width:2.0px;height:12.0px;background:#111;"></div>
<div class="r" style="left:1175.5px;top:119.0px;width:2.0px;height:12.0px;background:#111;"></div>
<div class="r" style="left:1211.5px;top:119.0px;width:2.0px;height:12.0px;background:#111;"></div>
<div class="r" style="left:1247.4px;top:119.0px;width:2.0px;height:12.0px;background:#111;"></div>
<div class="r" style="left:1283.4px;top:119.0px;width:2.0px;height:12.0px;background:#111;"></div>
<div class="r" style="left:1319.3px;top:108.0px;width:2.0px;height:23.0px;background:#111;"></div>
<div class="r" style="left:1355.3px;top:119.0px;width:2.0px;height:12.0px;background:#111;"></div>
<div class="r" style="left:1391.2px;top:119.0px;width:2.0px;height:12.0px;background:#111;"></div>
<div class="r" style="left:1427.2px;top:119.0px;width:2.0px;height:12.0px;background:#111;"></div>
<div class="r" style="left:1463.1px;top:119.0px;width:2.0px;height:12.0px;background:#111;"></div>
<div class="r" style="left:1499.1px;top:119.0px;width:2.0px;height:12.0px;background:#111;"></div>
<div class="r" style="left:1535.0px;top:119.0px;width:2.0px;height:12.0px;background:#111;"></div>
<div class="r" style="left:1571.0px;top:108.0px;width:2.0px;height:23.0px;background:#111;"></div>
<div class="r" style="left:1606.9px;top:119.0px;width:2.0px;height:12.0px;background:#111;"></div>
<div class="r" style="left:1642.9px;top:119.0px;width:2.0px;height:12.0px;background:#111;"></div>
<div class="r" style="left:1678.8px;top:119.0px;width:2.0px;height:12.0px;background:#111;"></div>
<div class="r" style="left:1714.8px;top:119.0px;width:2.0px;height:12.0px;background:#111;"></div>
<div class="r" style="left:1750.7px;top:119.0px;width:2.0px;height:12.0px;background:#111;"></div>
<div class="r" style="left:1786.7px;top:119.0px;width:2.0px;height:12.0px;background:#111;"></div>
<div class="r" style="left:1822.6px;top:108.0px;width:2.0px;height:23.0px;background:#111;"></div>
<div class="r" style="left:1858.6px;top:119.0px;width:2.0px;height:12.0px;background:#111;"></div>
<div class="r" style="left:1894.6px;top:119.0px;width:2.0px;height:12.0px;background:#111;"></div>
<div class="r" style="left:1930.5px;top:119.0px;width:2.0px;height:12.0px;background:#111;"></div>
<div class="r" style="left:1966.5px;top:119.0px;width:2.0px;height:12.0px;background:#111;"></div>
<div class="r" style="left:2002.4px;top:119.0px;width:2.0px;height:12.0px;background:#111;"></div>
<div class="r" style="left:2038.4px;top:119.0px;width:2.0px;height:12.0px;background:#111;"></div>
<div class="r" style="left:2074.3px;top:108.0px;width:2.0px;height:23.0px;background:#111;"></div>
<div class="r" style="left:2110.3px;top:119.0px;width:2.0px;height:12.0px;background:#111;"></div>
<div class="r" style="left:2146.2px;top:119.0px;width:2.0px;height:12.0px;background:#111;"></div>
<div class="r" style="left:2182.2px;top:119.0px;width:2.0px;height:12.0px;background:#111;"></div>
<div class="r" style="left:168.5px;top:132.0px;width:2.5px;height:402.0px;background:#8aa832;"></div>
<div class="r" style="left:182.0px;top:150.0px;width:152.0px;height:110.0px;background:#4f8fc0;border:2px solid #1b3a58;box-sizing:border-box;"></div>
<div class="r" style="left:182.0px;top:150.0px;width:152.0px;height:13.0px;background:#e8203a;border:2px solid #1b3a58;border-bottom:none;box-sizing:border-box;"></div>
<div class="r" style="left:216.0px;top:150.0px;width:2.0px;height:110.0px;background:#1b3a58;"></div>
<div class="r" style="left:322.0px;top:150.0px;width:2.0px;height:110.0px;background:#1b3a58;"></div>
<div class="t" style="left:187.0px;top:153.6px;font-size:30px;color:#0e2540;font-weight:400;font-family:'Liberation Sans',sans-serif;">1</div>
<div class="t" style="left:221.0px;top:153.6px;font-size:30px;color:#0e2540;font-weight:400;font-family:'Liberation Sans',sans-serif;">18000</div>
<div class="t" style="left:185.0px;top:189.6px;font-size:30px;color:#0e2540;font-weight:400;font-family:'Liberation Sans',sans-serif;">S</div>
<div class="t" style="left:221.0px;top:189.6px;font-size:30px;color:#0e2540;font-weight:400;font-family:'Liberation Sans',sans-serif;">Funkti</div>
<div class="t" style="left:189.0px;top:242.8px;font-size:12px;color:#0e2540;font-weight:400;font-family:'Liberation Sans',sans-serif;">• • •</div>
<div class="t" style="left:223.0px;top:242.8px;font-size:12px;color:#0e2540;font-weight:400;font-family:'Liberation Sans',sans-serif;">• • • • • • • • • •</div>
<svg class="r" style="left:337px;top:193px;" width="16" height="24" viewBox="0 0 16 24"><path d="M14 2 L2 12 L14 22 Z" fill="none" stroke="#333" stroke-width="2"/></svg>
<div class="r" style="left:162.5px;top:205.0px;width:1.5px;height:184.0px;background:#222;"></div>
<div class="r" style="left:162.5px;top:204.5px;width:20.0px;height:1.5px;background:#222;"></div>
<div class="r" style="left:0.0px;top:317.0px;width:169.5px;height:18.0px;background:#ece20c;border-bottom:2px solid #6a6a20;box-sizing:border-box;"></div>
<svg class="r" style="left:124px;top:316px;" width="20" height="20" viewBox="0 0 20 20"><path d="M1 1 L19 1 L10 18 Z" fill="none" stroke="#5a5a20" stroke-width="1.8"/></svg>
<div class="r" style="left:163.0px;top:298.0px;width:25.0px;height:27.0px;background:transparent;border:1.5px solid #222;border-left:none;box-sizing:border-box;"></div>
<div class="r" style="left:163.0px;top:388.0px;width:61.0px;height:29.0px;background:transparent;border:1.5px solid #222;border-left:none;border-bottom:none;box-sizing:border-box;"></div>
<div class="r" style="left:205.0px;top:415.5px;width:19.0px;height:1.5px;background:#222;"></div>
<div class="r" style="left:169.0px;top:408.0px;width:36.0px;height:19.0px;background:#c6f08c;border:1.5px solid #333;box-sizing:border-box;"></div>
<svg class="r" style="left:122px;top:406px;" width="24" height="22" viewBox="0 0 24 22"><path d="M2 2 L22 2 L12 20 Z" fill="#f2ea30" stroke="#444" stroke-width="1.8"/></svg>
<svg class="r" style="left:758px;top:102px;" width="44" height="66" viewBox="0 0 44 66"><path d="M3 3 L3 52 L14 41 L23 61 L31 57 L22 38 L38 38 Z" fill="#fff" stroke="#111" stroke-width="3" stroke-linejoin="round"/></svg>
</div>
<div class="r" style="left:2917.0px;top:1249.0px;width:1.5px;height:534.0px;background:#333;"></div>
<div class="r" style="left:389.5px;top:1781.5px;width:2562.5px;height:1.5px;background:#8e9096;"></div>
<div class="r" style="left:2918.5px;top:1249.0px;width:27.5px;height:532.0px;background:#f7f7fa;"></div>
<svg class="r" style="left:2926px;top:1386px;" width="16" height="12" viewBox="0 0 16 12"><path d="M2 10 L8 3 L14 10 Z" fill="#aab"/></svg>
<div class="r" style="left:2952.0px;top:1024.0px;width:5.0px;height:759.0px;background:#1f2e3b;"></div>
<div class="r" style="left:0.0px;top:1781.0px;width:3016.0px;height:2.0px;background:#4d535b;"></div>
</div>
</div></div>
</body></html>
